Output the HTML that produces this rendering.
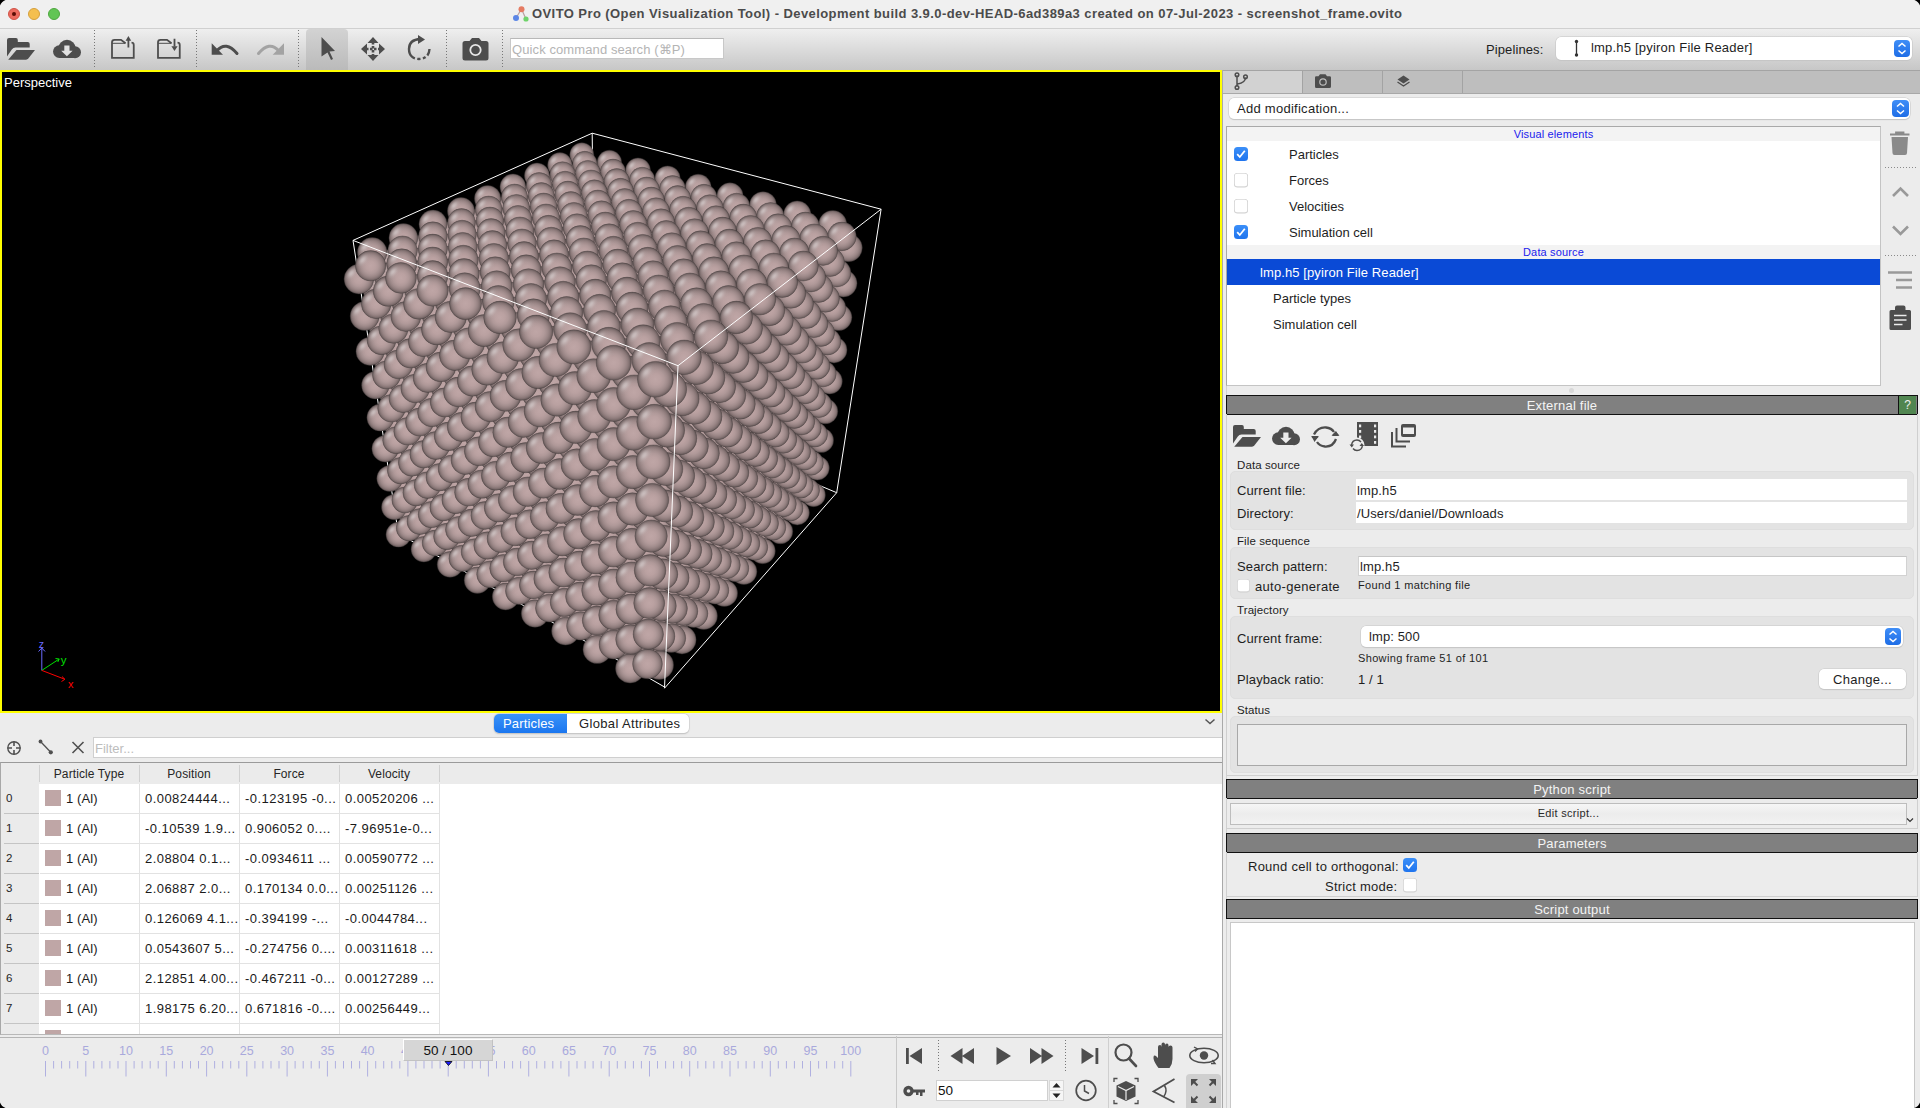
<!DOCTYPE html>
<html><head><meta charset="utf-8">
<style>
*{box-sizing:border-box;margin:0;padding:0}
html,body{width:1920px;height:1108px;overflow:hidden;background:#ececec;font-family:"Liberation Sans",sans-serif;font-size:13px;color:#1e1e1e}
.a{position:absolute}
.t{position:absolute;white-space:nowrap;line-height:1}
svg{position:absolute;overflow:visible}
.h{fill:url(#sh);stroke:none}
</style></head><body>
<!-- TITLE BAR -->
<div class="a" style="left:0;top:0;width:1920px;height:29px;background:#f0f0f0;border-bottom:1px solid #d0d0d0"></div>
<div class="a" style="left:8px;top:8px;width:12px;height:12px;border-radius:6px;background:#ec6a5e;border:0.5px solid #d15448"></div>
<div class="a" style="left:12px;top:12px;width:4px;height:4px;border-radius:2px;background:#5a0c05"></div>
<div class="a" style="left:28px;top:8px;width:12px;height:12px;border-radius:6px;background:#f4bf4f;border:0.5px solid #d6a03c"></div>
<div class="a" style="left:48px;top:8px;width:12px;height:12px;border-radius:6px;background:#61c554;border:0.5px solid #4ea83f"></div>
<svg style="left:512px;top:5px" width="18" height="18" viewBox="0 0 18 18">
<path d="M9.5 4L4 13M9.5 4L13.5 13" stroke="#b9a0a0" stroke-width="1.2"/>
<circle cx="9.5" cy="4.2" r="3" fill="#e57b62"/>
<circle cx="4" cy="13" r="3" fill="#5b86e6"/>
<circle cx="14" cy="14" r="2.6" fill="#6fd36a"/>
</svg>
<div class="t" style="left:532px;top:7px;font-size:13px;font-weight:700;color:#4b4b4b;letter-spacing:0.42px">OVITO Pro (Open Visualization Tool) - Development build 3.9.0-dev-HEAD-6ad389a3 created on 07-Jul-2023 - screenshot_frame.ovito</div>


<!-- TOOLBAR -->
<div class="a" style="left:0;top:29px;width:1920px;height:41px;background:linear-gradient(#efefef,#c7c7c7)"></div>
<div class="a" style="left:306px;top:29px;width:42px;height:41px;border-radius:4px 4px 0 0;background:linear-gradient(#d3d3d3,#bababa)"></div>
<svg style="left:0;top:28px" width="760" height="42" viewBox="0 28 760 42">
<g stroke="#777" stroke-width="1" stroke-dasharray="1 2">
<path d="M94.5 30V69M196.5 30V69M298.5 30V69M446.5 30V69M502.5 30V69"/>
</g>
<g fill="#4d4d4d">
<!-- open folder -->
<path d="M7 40Q7 38 9 38H16Q17.8 38 17.8 40V42H27.7Q29.7 42 29.7 44V47.5H15.5Q13.2 47.5 11.8 49.5L7 56.5Z"/>
<path d="M16.5 50H35L28.5 58.3Q27.4 59.7 26 59.7H8.2Z"/>
<!-- cloud download -->
<circle cx="59.3" cy="51.6" r="6.3"/><circle cx="67" cy="48.6" r="8.8"/><circle cx="75" cy="52.2" r="6"/>
<rect x="59" y="50" width="16.5" height="8"/>
</g>
<path d="M64.3 45.5H69.5V50.7H72.6L66.9 56.3L61.2 50.7H64.3Z" fill="#e2e2e2"/>
<g fill="none" stroke="#4d4d4d" stroke-width="1.8">
<path d="M125.5 43.3L121 39.8H114.5Q112 39.8 112 42.3V57.9H133.75V45Q133.75 42.7 131.5 42.7"/>
<path d="M171.5 43.3L167 39.8H160.5Q158 39.8 158 42.3V57.9H179.75V45Q179.75 42.7 177.5 42.7"/>
<path d="M128.4 47.6V40M174.5 38.7V46.5"/>
</g>
<path d="M112 43.3H125.5M158 43.3H171.5" stroke="#4d4d4d" stroke-width="1"/>
<g fill="#4d4d4d">
<path d="M125.6 40.8L128.4 35.9L131.2 40.8Z"/>
<path d="M171.4 46.2L174.5 51L177.6 46.2Z"/>
</g>
<!-- undo -->
<path d="M217 50.5Q226 40.5 237 53.5" fill="none" stroke="#4d4d4d" stroke-width="3" stroke-linecap="round"/>
<path d="M211.7 43.3V54.7H223Z" fill="#4d4d4d"/>
<!-- redo -->
<path d="M278.5 50.5Q269.5 40.5 258.5 53.5" fill="none" stroke="#a3a3a3" stroke-width="3" stroke-linecap="round"/>
<path d="M284 43.3V54.7H272.7Z" fill="#a3a3a3"/>
<!-- arrow -->
<path d="M321.5 37L335 51L329.5 51.5L333 59L331 60L327.5 52.5L321.5 56.5Z" fill="#4d4d4d"/>
<!-- move -->
<g fill="#4d4d4d">
<path d="M373 37L378.5 43H367.5Z M373 61L378.5 55H367.5Z M361 49L367 43.5V54.5Z M385 49L379 43.5V54.5Z"/>
</g>
<path d="M373 42V56M366 49H380" stroke="#4d4d4d" stroke-width="2.6" stroke-dasharray="2.5 1.5"/>
<!-- rotate -->
<path d="M420.5 39Q409 39.5 409 49Q409 58.5 419 59Q429 58.5 429.5 49" fill="none" stroke="#4d4d4d" stroke-width="2.4" stroke-dasharray="26 0 3 2.5 3 2.5 3 2.5"/>
<path d="M418 35L425 39.5L418 44Z" fill="#4d4d4d"/>
<!-- camera -->
<path d="M462.5 43.5Q462.5 41 465 41H469.5L472 38H479L481.5 41H486Q488.5 41 488.5 43.5V58Q488.5 60.5 486 60.5H465Q462.5 60.5 462.5 58Z" fill="#4d4d4d"/>
<circle cx="475.5" cy="50" r="5.2" fill="none" stroke="#e6e6e6" stroke-width="1.8"/>
</svg>
<div class="a" style="left:510px;top:38px;width:214px;height:21px;background:#fff;border:1px solid #c8c8c8;border-top-color:#b8b8b8"></div>
<div class="t" style="left:512px;top:43px;font-size:13px;color:#b4b4b4;letter-spacing:0.1px">Quick command search (⌘P)</div>
<div class="t" style="left:1486px;top:43px;font-size:13px;color:#1e1e1e;letter-spacing:0.1px">Pipelines:</div>
<div class="a" style="left:1556px;top:37px;width:356px;height:23px;background:#fff;border-radius:5px;box-shadow:0 0 0 0.5px #c4c4c4,0 1px 1px #c8c8c8"></div>
<svg style="left:1570px;top:37px" width="14" height="23" viewBox="0 0 14 23"><path d="M6.5 4.5V18" stroke="#333" stroke-width="1.3"/><circle cx="6.5" cy="4.5" r="1.7" fill="#333"/><circle cx="6.5" cy="18" r="1.7" fill="#333"/></svg>
<div class="t" style="left:1591px;top:41px;font-size:13px;color:#1e1e1e;letter-spacing:0.2px">lmp.h5 [pyiron File Reader]</div>
<div class="a" style="left:1894px;top:40px;width:16px;height:17px;background:linear-gradient(#3f8ef7,#1e6de6);border-radius:4px"></div>
<svg style="left:1894px;top:40px" width="16" height="17" viewBox="0 0 16 17"><path d="M4.5 6.5L8 3.5L11.5 6.5M4.5 10.5L8 13.5L11.5 10.5" stroke="#fff" stroke-width="1.5" fill="none"/></svg>


<!-- VIEWPORT -->
<div class="a" style="left:0;top:70px;width:1222px;height:643px;background:#000;border:2px solid #ffff00"></div>
<div class="t" style="left:4px;top:76px;color:#fff;font-size:13px">Perspective</div>
<svg style="left:2px;top:72px" width="1218" height="639" viewBox="0 0 1218 639">
<defs>
<radialGradient id="sd" cx="0.5" cy="0.5" r="0.5"><stop offset="0.00" stop-color="#bfa6a6"/><stop offset="0.30" stop-color="#baa1a1"/><stop offset="0.50" stop-color="#b09999"/><stop offset="0.65" stop-color="#a38e8e"/><stop offset="0.75" stop-color="#988484"/><stop offset="0.85" stop-color="#897777"/><stop offset="0.92" stop-color="#796969"/><stop offset="0.97" stop-color="#685b5b"/><stop offset="1.00" stop-color="#4c4242"/></radialGradient>
<radialGradient id="sh" cx="0" cy="0" r="1" gradientTransform="translate(0.235 0.3) rotate(-50.2) scale(0.3947 0.227)"><stop offset="0.000" stop-color="#fff" stop-opacity="0.420"/><stop offset="0.167" stop-color="#fff" stop-opacity="0.361"/><stop offset="0.333" stop-color="#fff" stop-opacity="0.229"/><stop offset="0.500" stop-color="#fff" stop-opacity="0.107"/><stop offset="0.667" stop-color="#fff" stop-opacity="0.037"/><stop offset="0.833" stop-color="#fff" stop-opacity="0.009"/><stop offset="1.000" stop-color="#fff" stop-opacity="0.002"/></radialGradient>
</defs>
<g stroke="#fff" stroke-width="1" fill="none">
<path d="M396.5 461.4L662.5 615.0M396.5 462.6L351.0 168.4M396.5 462.6L593.2 319.2L834.7 420.7M593.2 319.2L590.2 61.2"/>
</g>

<g fill="url(#sd)" stroke="#4c4242" stroke-width="0.45" stroke-opacity="0.8">
<circle cx="811.6" cy="422.9" r="11.8"/><circle class="h" cx="811.6" cy="422.9" r="11.8"/>
<circle cx="798.1" cy="403.2" r="11.8"/><circle class="h" cx="798.1" cy="403.2" r="11.8"/>
<circle cx="788.3" cy="425.1" r="11.8"/><circle class="h" cx="788.3" cy="425.1" r="11.8"/>
<circle cx="579.8" cy="82.7" r="12.0"/><circle class="h" cx="579.8" cy="82.7" r="12.0"/>
<circle cx="593.7" cy="103.0" r="12.0"/><circle class="h" cx="593.7" cy="103.0" r="12.0"/>
<circle cx="569.4" cy="104.3" r="12.0"/><circle class="h" cx="569.4" cy="104.3" r="12.0"/>
<circle cx="815.3" cy="396.1" r="12.0"/><circle class="h" cx="815.3" cy="396.1" r="12.0"/>
<circle cx="805.4" cy="418.4" r="12.1"/><circle class="h" cx="805.4" cy="418.4" r="12.1"/>
<circle cx="795.3" cy="440.8" r="12.1"/><circle class="h" cx="795.3" cy="440.8" r="12.1"/>
<circle cx="801.7" cy="376.0" r="12.0"/><circle class="h" cx="801.7" cy="376.0" r="12.0"/>
<circle cx="791.7" cy="398.3" r="12.0"/><circle class="h" cx="791.7" cy="398.3" r="12.0"/>
<circle cx="781.6" cy="420.6" r="12.1"/><circle class="h" cx="781.6" cy="420.6" r="12.1"/>
<circle cx="771.5" cy="443.1" r="12.1"/><circle class="h" cx="771.5" cy="443.1" r="12.1"/>
<circle cx="607.4" cy="90.4" r="12.2"/><circle class="h" cx="607.4" cy="90.4" r="12.2"/>
<circle cx="582.8" cy="91.6" r="12.3"/><circle class="h" cx="582.8" cy="91.6" r="12.3"/>
<circle cx="621.5" cy="111.0" r="12.2"/><circle class="h" cx="621.5" cy="111.0" r="12.2"/>
<circle cx="557.9" cy="92.9" r="12.3"/><circle class="h" cx="557.9" cy="92.9" r="12.3"/>
<circle cx="596.9" cy="112.4" r="12.2"/><circle class="h" cx="596.9" cy="112.4" r="12.2"/>
<circle cx="819.3" cy="368.2" r="12.3"/><circle class="h" cx="819.3" cy="368.2" r="12.3"/>
<circle cx="396.5" cy="462.6" r="12.5"/><circle class="h" cx="396.5" cy="462.6" r="12.5"/>
<circle cx="572.1" cy="113.7" r="12.3"/><circle class="h" cx="572.1" cy="113.7" r="12.3"/>
<circle cx="809.1" cy="390.9" r="12.3"/><circle class="h" cx="809.1" cy="390.9" r="12.3"/>
<circle cx="547.2" cy="115.1" r="12.3"/><circle class="h" cx="547.2" cy="115.1" r="12.3"/>
<circle cx="422.1" cy="460.1" r="12.4"/><circle class="h" cx="422.1" cy="460.1" r="12.4"/>
<circle cx="798.9" cy="413.7" r="12.3"/><circle class="h" cx="798.9" cy="413.7" r="12.3"/>
<circle cx="407.6" cy="439.5" r="12.5"/><circle class="h" cx="407.6" cy="439.5" r="12.5"/>
<circle cx="788.7" cy="436.5" r="12.3"/><circle class="h" cx="788.7" cy="436.5" r="12.3"/>
<circle cx="778.4" cy="459.4" r="12.4"/><circle class="h" cx="778.4" cy="459.4" r="12.4"/>
<circle cx="795.1" cy="370.4" r="12.3"/><circle class="h" cx="795.1" cy="370.4" r="12.3"/>
<circle cx="784.9" cy="393.1" r="12.3"/><circle class="h" cx="784.9" cy="393.1" r="12.3"/>
<circle cx="774.6" cy="415.9" r="12.3"/><circle class="h" cx="774.6" cy="415.9" r="12.3"/>
<circle cx="636.0" cy="98.3" r="12.4"/><circle class="h" cx="636.0" cy="98.3" r="12.4"/>
<circle cx="764.3" cy="438.9" r="12.3"/><circle class="h" cx="764.3" cy="438.9" r="12.3"/>
<circle cx="753.9" cy="461.9" r="12.4"/><circle class="h" cx="753.9" cy="461.9" r="12.4"/>
<circle cx="650.3" cy="119.3" r="12.4"/><circle class="h" cx="650.3" cy="119.3" r="12.4"/>
<circle cx="611.0" cy="99.6" r="12.5"/><circle class="h" cx="611.0" cy="99.6" r="12.5"/>
<circle cx="585.8" cy="100.9" r="12.5"/><circle class="h" cx="585.8" cy="100.9" r="12.5"/>
<circle cx="625.3" cy="120.7" r="12.4"/><circle class="h" cx="625.3" cy="120.7" r="12.4"/>
<circle cx="823.3" cy="339.3" r="12.5"/><circle class="h" cx="823.3" cy="339.3" r="12.5"/>
<circle cx="560.5" cy="102.3" r="12.6"/><circle class="h" cx="560.5" cy="102.3" r="12.6"/>
<circle cx="600.2" cy="122.1" r="12.5"/><circle class="h" cx="600.2" cy="122.1" r="12.5"/>
<circle cx="421.8" cy="477.2" r="12.7"/><circle class="h" cx="421.8" cy="477.2" r="12.7"/>
<circle cx="535.0" cy="103.6" r="12.6"/><circle class="h" cx="535.0" cy="103.6" r="12.6"/>
<circle cx="813.0" cy="362.4" r="12.5"/><circle class="h" cx="813.0" cy="362.4" r="12.5"/>
<circle cx="407.0" cy="456.2" r="12.7"/><circle class="h" cx="407.0" cy="456.2" r="12.7"/>
<circle cx="447.9" cy="474.7" r="12.6"/><circle class="h" cx="447.9" cy="474.7" r="12.6"/>
<circle cx="392.2" cy="435.1" r="12.7"/><circle class="h" cx="392.2" cy="435.1" r="12.7"/>
<circle cx="575.0" cy="123.5" r="12.5"/><circle class="h" cx="575.0" cy="123.5" r="12.5"/>
<circle cx="433.1" cy="453.7" r="12.7"/><circle class="h" cx="433.1" cy="453.7" r="12.7"/>
<circle cx="802.6" cy="385.5" r="12.5"/><circle class="h" cx="802.6" cy="385.5" r="12.5"/>
<circle cx="418.4" cy="432.7" r="12.7"/><circle class="h" cx="418.4" cy="432.7" r="12.7"/>
<circle cx="549.5" cy="124.9" r="12.6"/><circle class="h" cx="549.5" cy="124.9" r="12.6"/>
<circle cx="403.6" cy="411.6" r="12.7"/><circle class="h" cx="403.6" cy="411.6" r="12.7"/>
<circle cx="523.9" cy="126.3" r="12.6"/><circle class="h" cx="523.9" cy="126.3" r="12.6"/>
<circle cx="792.2" cy="408.7" r="12.6"/><circle class="h" cx="792.2" cy="408.7" r="12.6"/>
<circle cx="781.7" cy="432.1" r="12.6"/><circle class="h" cx="781.7" cy="432.1" r="12.6"/>
<circle cx="665.6" cy="106.5" r="12.6"/><circle class="h" cx="665.6" cy="106.5" r="12.6"/>
<circle cx="771.2" cy="455.5" r="12.6"/><circle class="h" cx="771.2" cy="455.5" r="12.6"/>
<circle cx="788.3" cy="364.5" r="12.5"/><circle class="h" cx="788.3" cy="364.5" r="12.5"/>
<circle cx="760.6" cy="479.0" r="12.7"/><circle class="h" cx="760.6" cy="479.0" r="12.7"/>
<circle cx="777.9" cy="387.7" r="12.5"/><circle class="h" cx="777.9" cy="387.7" r="12.5"/>
<circle cx="640.2" cy="107.9" r="12.7"/><circle class="h" cx="640.2" cy="107.9" r="12.7"/>
<circle cx="767.3" cy="411.1" r="12.6"/><circle class="h" cx="767.3" cy="411.1" r="12.6"/>
<circle cx="756.8" cy="434.5" r="12.6"/><circle class="h" cx="756.8" cy="434.5" r="12.6"/>
<circle cx="735.5" cy="481.6" r="12.7"/><circle class="h" cx="735.5" cy="481.6" r="12.7"/>
<circle cx="746.2" cy="458.0" r="12.6"/><circle class="h" cx="746.2" cy="458.0" r="12.6"/>
<circle cx="614.7" cy="109.3" r="12.7"/><circle class="h" cx="614.7" cy="109.3" r="12.7"/>
<circle cx="827.6" cy="309.2" r="12.7"/><circle class="h" cx="827.6" cy="309.2" r="12.7"/>
<circle cx="629.3" cy="130.8" r="12.7"/><circle class="h" cx="629.3" cy="130.8" r="12.7"/>
<circle cx="589.0" cy="110.7" r="12.8"/><circle class="h" cx="589.0" cy="110.7" r="12.8"/>
<circle cx="448.1" cy="492.4" r="12.9"/><circle class="h" cx="448.1" cy="492.4" r="12.9"/>
<circle cx="474.5" cy="489.8" r="12.9"/><circle class="h" cx="474.5" cy="489.8" r="12.9"/>
<circle cx="817.0" cy="332.7" r="12.8"/><circle class="h" cx="817.0" cy="332.7" r="12.8"/>
<circle cx="563.1" cy="112.0" r="12.8"/><circle class="h" cx="563.1" cy="112.0" r="12.8"/>
<circle cx="433.1" cy="471.0" r="12.9"/><circle class="h" cx="433.1" cy="471.0" r="12.9"/>
<circle cx="603.7" cy="132.2" r="12.7"/><circle class="h" cx="603.7" cy="132.2" r="12.7"/>
<circle cx="418.0" cy="449.5" r="13.0"/><circle class="h" cx="418.0" cy="449.5" r="13.0"/>
<circle cx="459.6" cy="468.4" r="12.9"/><circle class="h" cx="459.6" cy="468.4" r="12.9"/>
<circle cx="537.1" cy="113.4" r="12.9"/><circle class="h" cx="537.1" cy="113.4" r="12.9"/>
<circle cx="402.9" cy="428.0" r="13.0"/><circle class="h" cx="402.9" cy="428.0" r="13.0"/>
<circle cx="387.8" cy="406.5" r="13.0"/><circle class="h" cx="387.8" cy="406.5" r="13.0"/>
<circle cx="806.4" cy="356.2" r="12.8"/><circle class="h" cx="806.4" cy="356.2" r="12.8"/>
<circle cx="510.9" cy="114.8" r="12.9"/><circle class="h" cx="510.9" cy="114.8" r="12.9"/>
<circle cx="444.6" cy="447.0" r="12.9"/><circle class="h" cx="444.6" cy="447.0" r="12.9"/>
<circle cx="577.9" cy="133.7" r="12.8"/><circle class="h" cx="577.9" cy="133.7" r="12.8"/>
<circle cx="696.2" cy="115.1" r="12.9"/><circle class="h" cx="696.2" cy="115.1" r="12.9"/>
<circle cx="429.6" cy="425.6" r="12.9"/><circle class="h" cx="429.6" cy="425.6" r="12.9"/>
<circle cx="399.4" cy="382.6" r="12.9"/><circle class="h" cx="399.4" cy="382.6" r="12.9"/>
<circle cx="414.5" cy="404.1" r="12.9"/><circle class="h" cx="414.5" cy="404.1" r="12.9"/>
<circle cx="551.9" cy="135.2" r="12.8"/><circle class="h" cx="551.9" cy="135.2" r="12.8"/>
<circle cx="795.8" cy="379.8" r="12.8"/><circle class="h" cx="795.8" cy="379.8" r="12.8"/>
<circle cx="791.9" cy="334.8" r="12.8"/><circle class="h" cx="791.9" cy="334.8" r="12.8"/>
<circle cx="525.8" cy="136.6" r="12.9"/><circle class="h" cx="525.8" cy="136.6" r="12.9"/>
<circle cx="785.1" cy="403.6" r="12.8"/><circle class="h" cx="785.1" cy="403.6" r="12.8"/>
<circle cx="499.5" cy="138.1" r="12.9"/><circle class="h" cx="499.5" cy="138.1" r="12.9"/>
<circle cx="670.5" cy="116.5" r="12.9"/><circle class="h" cx="670.5" cy="116.5" r="12.9"/>
<circle cx="774.4" cy="427.4" r="12.9"/><circle class="h" cx="774.4" cy="427.4" r="12.9"/>
<circle cx="781.2" cy="358.4" r="12.8"/><circle class="h" cx="781.2" cy="358.4" r="12.8"/>
<circle cx="741.9" cy="499.6" r="13.0"/><circle class="h" cx="741.9" cy="499.6" r="13.0"/>
<circle cx="763.6" cy="451.4" r="12.9"/><circle class="h" cx="763.6" cy="451.4" r="12.9"/>
<circle cx="752.8" cy="475.4" r="12.9"/><circle class="h" cx="752.8" cy="475.4" r="12.9"/>
<circle cx="770.5" cy="382.1" r="12.8"/><circle class="h" cx="770.5" cy="382.1" r="12.8"/>
<circle cx="644.6" cy="117.9" r="12.9"/><circle class="h" cx="644.6" cy="117.9" r="12.9"/>
<circle cx="832.0" cy="277.9" r="13.0"/><circle class="h" cx="832.0" cy="277.9" r="13.0"/>
<circle cx="759.7" cy="405.9" r="12.8"/><circle class="h" cx="759.7" cy="405.9" r="12.8"/>
<circle cx="716.2" cy="502.3" r="13.0"/><circle class="h" cx="716.2" cy="502.3" r="13.0"/>
<circle cx="748.9" cy="429.9" r="12.9"/><circle class="h" cx="748.9" cy="429.9" r="12.9"/>
<circle cx="659.5" cy="139.8" r="12.9"/><circle class="h" cx="659.5" cy="139.8" r="12.9"/>
<circle cx="727.1" cy="478.0" r="13.0"/><circle class="h" cx="727.1" cy="478.0" r="13.0"/>
<circle cx="738.0" cy="453.9" r="12.9"/><circle class="h" cx="738.0" cy="453.9" r="12.9"/>
<circle cx="618.5" cy="119.3" r="13.0"/><circle class="h" cx="618.5" cy="119.3" r="13.0"/>
<circle cx="475.4" cy="508.2" r="13.2"/><circle class="h" cx="475.4" cy="508.2" r="13.2"/>
<circle cx="502.2" cy="505.4" r="13.1"/><circle class="h" cx="502.2" cy="505.4" r="13.1"/>
<circle cx="821.2" cy="301.8" r="13.0"/><circle class="h" cx="821.2" cy="301.8" r="13.0"/>
<circle cx="633.5" cy="141.3" r="12.9"/><circle class="h" cx="633.5" cy="141.3" r="12.9"/>
<circle cx="460.1" cy="486.4" r="13.2"/><circle class="h" cx="460.1" cy="486.4" r="13.2"/>
<circle cx="592.3" cy="120.8" r="13.0"/><circle class="h" cx="592.3" cy="120.8" r="13.0"/>
<circle cx="728.0" cy="123.9" r="13.1"/><circle class="h" cx="728.0" cy="123.9" r="13.1"/>
<circle cx="487.0" cy="483.7" r="13.1"/><circle class="h" cx="487.0" cy="483.7" r="13.1"/>
<circle cx="444.8" cy="464.5" r="13.2"/><circle class="h" cx="444.8" cy="464.5" r="13.2"/>
<circle cx="810.4" cy="325.7" r="13.0"/><circle class="h" cx="810.4" cy="325.7" r="13.0"/>
<circle cx="565.9" cy="122.2" r="13.1"/><circle class="h" cx="565.9" cy="122.2" r="13.1"/>
<circle cx="471.7" cy="461.9" r="13.1"/><circle class="h" cx="471.7" cy="461.9" r="13.1"/>
<circle cx="607.3" cy="142.8" r="13.0"/><circle class="h" cx="607.3" cy="142.8" r="13.0"/>
<circle cx="429.4" cy="442.6" r="13.2"/><circle class="h" cx="429.4" cy="442.6" r="13.2"/>
<circle cx="383.2" cy="376.7" r="13.3"/><circle class="h" cx="383.2" cy="376.7" r="13.3"/>
<circle cx="414.1" cy="420.7" r="13.2"/><circle class="h" cx="414.1" cy="420.7" r="13.2"/>
<circle cx="398.6" cy="398.7" r="13.2"/><circle class="h" cx="398.6" cy="398.7" r="13.2"/>
<circle cx="456.5" cy="440.1" r="13.1"/><circle class="h" cx="456.5" cy="440.1" r="13.1"/>
<circle cx="395.0" cy="352.3" r="13.2"/><circle class="h" cx="395.0" cy="352.3" r="13.2"/>
<circle cx="539.3" cy="123.7" r="13.1"/><circle class="h" cx="539.3" cy="123.7" r="13.1"/>
<circle cx="441.2" cy="418.2" r="13.1"/><circle class="h" cx="441.2" cy="418.2" r="13.1"/>
<circle cx="410.4" cy="374.4" r="13.2"/><circle class="h" cx="410.4" cy="374.4" r="13.2"/>
<circle cx="425.8" cy="396.3" r="13.1"/><circle class="h" cx="425.8" cy="396.3" r="13.1"/>
<circle cx="512.5" cy="125.2" r="13.2"/><circle class="h" cx="512.5" cy="125.2" r="13.2"/>
<circle cx="581.0" cy="144.3" r="13.0"/><circle class="h" cx="581.0" cy="144.3" r="13.0"/>
<circle cx="799.6" cy="349.8" r="13.1"/><circle class="h" cx="799.6" cy="349.8" r="13.1"/>
<circle cx="701.9" cy="125.4" r="13.1"/><circle class="h" cx="701.9" cy="125.4" r="13.1"/>
<circle cx="485.6" cy="126.6" r="13.2"/><circle class="h" cx="485.6" cy="126.6" r="13.2"/>
<circle cx="554.5" cy="145.9" r="13.1"/><circle class="h" cx="554.5" cy="145.9" r="13.1"/>
<circle cx="788.7" cy="373.9" r="13.1"/><circle class="h" cx="788.7" cy="373.9" r="13.1"/>
<circle cx="527.8" cy="147.4" r="13.1"/><circle class="h" cx="527.8" cy="147.4" r="13.1"/>
<circle cx="784.7" cy="327.8" r="13.1"/><circle class="h" cx="784.7" cy="327.8" r="13.1"/>
<circle cx="500.9" cy="149.0" r="13.2"/><circle class="h" cx="500.9" cy="149.0" r="13.2"/>
<circle cx="473.9" cy="150.5" r="13.3"/><circle class="h" cx="473.9" cy="150.5" r="13.3"/>
<circle cx="777.8" cy="398.2" r="13.1"/><circle class="h" cx="777.8" cy="398.2" r="13.1"/>
<circle cx="836.6" cy="245.3" r="13.3"/><circle class="h" cx="836.6" cy="245.3" r="13.3"/>
<circle cx="675.6" cy="126.8" r="13.2"/><circle class="h" cx="675.6" cy="126.8" r="13.2"/>
<circle cx="722.3" cy="521.2" r="13.3"/><circle class="h" cx="722.3" cy="521.2" r="13.3"/>
<circle cx="766.8" cy="422.6" r="13.1"/><circle class="h" cx="766.8" cy="422.6" r="13.1"/>
<circle cx="773.8" cy="352.0" r="13.1"/><circle class="h" cx="773.8" cy="352.0" r="13.1"/>
<circle cx="733.5" cy="496.4" r="13.3"/><circle class="h" cx="733.5" cy="496.4" r="13.3"/>
<circle cx="755.7" cy="447.1" r="13.2"/><circle class="h" cx="755.7" cy="447.1" r="13.2"/>
<circle cx="744.6" cy="471.7" r="13.2"/><circle class="h" cx="744.6" cy="471.7" r="13.2"/>
<circle cx="530.9" cy="521.7" r="13.3"/><circle class="h" cx="530.9" cy="521.7" r="13.3"/>
<circle cx="503.7" cy="524.5" r="13.4"/><circle class="h" cx="503.7" cy="524.5" r="13.4"/>
<circle cx="762.8" cy="376.2" r="13.1"/><circle class="h" cx="762.8" cy="376.2" r="13.1"/>
<circle cx="649.2" cy="128.3" r="13.2"/><circle class="h" cx="649.2" cy="128.3" r="13.2"/>
<circle cx="761.0" cy="133.1" r="13.4"/><circle class="h" cx="761.0" cy="133.1" r="13.4"/>
<circle cx="825.6" cy="269.6" r="13.3"/><circle class="h" cx="825.6" cy="269.6" r="13.3"/>
<circle cx="695.8" cy="524.0" r="13.4"/><circle class="h" cx="695.8" cy="524.0" r="13.4"/>
<circle cx="751.7" cy="400.6" r="13.1"/><circle class="h" cx="751.7" cy="400.6" r="13.1"/>
<circle cx="664.4" cy="150.7" r="13.2"/><circle class="h" cx="664.4" cy="150.7" r="13.2"/>
<circle cx="707.1" cy="499.1" r="13.3"/><circle class="h" cx="707.1" cy="499.1" r="13.3"/>
<circle cx="740.7" cy="425.1" r="13.2"/><circle class="h" cx="740.7" cy="425.1" r="13.2"/>
<circle cx="488.1" cy="502.3" r="13.4"/><circle class="h" cx="488.1" cy="502.3" r="13.4"/>
<circle cx="515.4" cy="499.6" r="13.3"/><circle class="h" cx="515.4" cy="499.6" r="13.3"/>
<circle cx="718.3" cy="474.3" r="13.3"/><circle class="h" cx="718.3" cy="474.3" r="13.3"/>
<circle cx="729.5" cy="449.6" r="13.2"/><circle class="h" cx="729.5" cy="449.6" r="13.2"/>
<circle cx="622.6" cy="129.8" r="13.3"/><circle class="h" cx="622.6" cy="129.8" r="13.3"/>
<circle cx="472.6" cy="480.1" r="13.4"/><circle class="h" cx="472.6" cy="480.1" r="13.4"/>
<circle cx="814.6" cy="294.0" r="13.3"/><circle class="h" cx="814.6" cy="294.0" r="13.3"/>
<circle cx="499.9" cy="477.4" r="13.3"/><circle class="h" cx="499.9" cy="477.4" r="13.3"/>
<circle cx="637.8" cy="152.3" r="13.2"/><circle class="h" cx="637.8" cy="152.3" r="13.2"/>
<circle cx="734.5" cy="134.6" r="13.4"/><circle class="h" cx="734.5" cy="134.6" r="13.4"/>
<circle cx="595.8" cy="131.3" r="13.3"/><circle class="h" cx="595.8" cy="131.3" r="13.3"/>
<circle cx="456.9" cy="457.8" r="13.4"/><circle class="h" cx="456.9" cy="457.8" r="13.4"/>
<circle cx="378.4" cy="345.6" r="13.5"/><circle class="h" cx="378.4" cy="345.6" r="13.5"/>
<circle cx="484.4" cy="455.2" r="13.3"/><circle class="h" cx="484.4" cy="455.2" r="13.3"/>
<circle cx="390.5" cy="320.9" r="13.5"/><circle class="h" cx="390.5" cy="320.9" r="13.5"/>
<circle cx="441.3" cy="435.5" r="13.4"/><circle class="h" cx="441.3" cy="435.5" r="13.4"/>
<circle cx="394.2" cy="368.2" r="13.5"/><circle class="h" cx="394.2" cy="368.2" r="13.5"/>
<circle cx="425.6" cy="413.1" r="13.4"/><circle class="h" cx="425.6" cy="413.1" r="13.4"/>
<circle cx="409.9" cy="390.7" r="13.5"/><circle class="h" cx="409.9" cy="390.7" r="13.5"/>
<circle cx="568.8" cy="132.9" r="13.3"/><circle class="h" cx="568.8" cy="132.9" r="13.3"/>
<circle cx="611.1" cy="153.9" r="13.3"/><circle class="h" cx="611.1" cy="153.9" r="13.3"/>
<circle cx="803.5" cy="318.4" r="13.3"/><circle class="h" cx="803.5" cy="318.4" r="13.3"/>
<circle cx="468.8" cy="432.9" r="13.4"/><circle class="h" cx="468.8" cy="432.9" r="13.4"/>
<circle cx="406.2" cy="343.4" r="13.4"/><circle class="h" cx="406.2" cy="343.4" r="13.4"/>
<circle cx="453.2" cy="410.6" r="13.4"/><circle class="h" cx="453.2" cy="410.6" r="13.4"/>
<circle cx="421.9" cy="365.8" r="13.4"/><circle class="h" cx="421.9" cy="365.8" r="13.4"/>
<circle cx="437.6" cy="388.3" r="13.4"/><circle class="h" cx="437.6" cy="388.3" r="13.4"/>
<circle cx="541.6" cy="134.4" r="13.4"/><circle class="h" cx="541.6" cy="134.4" r="13.4"/>
<circle cx="841.4" cy="211.3" r="13.6"/><circle class="h" cx="841.4" cy="211.3" r="13.6"/>
<circle cx="584.2" cy="155.5" r="13.3"/><circle class="h" cx="584.2" cy="155.5" r="13.3"/>
<circle cx="707.8" cy="136.1" r="13.4"/><circle class="h" cx="707.8" cy="136.1" r="13.4"/>
<circle cx="514.2" cy="135.9" r="13.5"/><circle class="h" cx="514.2" cy="135.9" r="13.5"/>
<circle cx="788.3" cy="296.0" r="13.3"/><circle class="h" cx="788.3" cy="296.0" r="13.3"/>
<circle cx="792.4" cy="343.0" r="13.4"/><circle class="h" cx="792.4" cy="343.0" r="13.4"/>
<circle cx="459.0" cy="139.0" r="13.6"/><circle class="h" cx="459.0" cy="139.0" r="13.6"/>
<circle cx="486.7" cy="137.5" r="13.5"/><circle class="h" cx="486.7" cy="137.5" r="13.5"/>
<circle cx="795.2" cy="142.6" r="13.7"/><circle class="h" cx="795.2" cy="142.6" r="13.7"/>
<circle cx="557.1" cy="157.1" r="13.4"/><circle class="h" cx="557.1" cy="157.1" r="13.4"/>
<circle cx="560.6" cy="538.5" r="13.6"/><circle class="h" cx="560.6" cy="538.5" r="13.6"/>
<circle cx="781.3" cy="367.8" r="13.4"/><circle class="h" cx="781.3" cy="367.8" r="13.4"/>
<circle cx="529.9" cy="158.7" r="13.4"/><circle class="h" cx="529.9" cy="158.7" r="13.4"/>
<circle cx="533.0" cy="541.5" r="13.7"/><circle class="h" cx="533.0" cy="541.5" r="13.7"/>
<circle cx="777.2" cy="320.6" r="13.3"/><circle class="h" cx="777.2" cy="320.6" r="13.3"/>
<circle cx="446.9" cy="163.6" r="13.6"/><circle class="h" cx="446.9" cy="163.6" r="13.6"/>
<circle cx="502.4" cy="160.3" r="13.5"/><circle class="h" cx="502.4" cy="160.3" r="13.5"/>
<circle cx="474.7" cy="161.9" r="13.5"/><circle class="h" cx="474.7" cy="161.9" r="13.5"/>
<circle cx="681.0" cy="137.7" r="13.5"/><circle class="h" cx="681.0" cy="137.7" r="13.5"/>
<circle cx="830.2" cy="236.0" r="13.6"/><circle class="h" cx="830.2" cy="236.0" r="13.6"/>
<circle cx="701.7" cy="543.9" r="13.7"/><circle class="h" cx="701.7" cy="543.9" r="13.7"/>
<circle cx="770.1" cy="392.6" r="13.4"/><circle class="h" cx="770.1" cy="392.6" r="13.4"/>
<circle cx="713.2" cy="518.4" r="13.6"/><circle class="h" cx="713.2" cy="518.4" r="13.6"/>
<circle cx="758.8" cy="417.5" r="13.4"/><circle class="h" cx="758.8" cy="417.5" r="13.4"/>
<circle cx="544.9" cy="516.0" r="13.6"/><circle class="h" cx="544.9" cy="516.0" r="13.6"/>
<circle cx="766.0" cy="345.3" r="13.4"/><circle class="h" cx="766.0" cy="345.3" r="13.4"/>
<circle cx="517.2" cy="518.9" r="13.7"/><circle class="h" cx="517.2" cy="518.9" r="13.7"/>
<circle cx="724.7" cy="493.0" r="13.6"/><circle class="h" cx="724.7" cy="493.0" r="13.6"/>
<circle cx="747.5" cy="442.6" r="13.5"/><circle class="h" cx="747.5" cy="442.6" r="13.5"/>
<circle cx="736.1" cy="467.7" r="13.5"/><circle class="h" cx="736.1" cy="467.7" r="13.5"/>
<circle cx="768.3" cy="144.2" r="13.7"/><circle class="h" cx="768.3" cy="144.2" r="13.7"/>
<circle cx="654.0" cy="139.2" r="13.5"/><circle class="h" cx="654.0" cy="139.2" r="13.5"/>
<circle cx="674.4" cy="546.9" r="13.7"/><circle class="h" cx="674.4" cy="546.9" r="13.7"/>
<circle cx="754.7" cy="370.1" r="13.4"/><circle class="h" cx="754.7" cy="370.1" r="13.4"/>
<circle cx="819.0" cy="260.8" r="13.6"/><circle class="h" cx="819.0" cy="260.8" r="13.6"/>
<circle cx="529.2" cy="493.4" r="13.6"/><circle class="h" cx="529.2" cy="493.4" r="13.6"/>
<circle cx="669.5" cy="162.1" r="13.5"/><circle class="h" cx="669.5" cy="162.1" r="13.5"/>
<circle cx="501.4" cy="496.2" r="13.7"/><circle class="h" cx="501.4" cy="496.2" r="13.7"/>
<circle cx="686.1" cy="521.3" r="13.7"/><circle class="h" cx="686.1" cy="521.3" r="13.7"/>
<circle cx="743.4" cy="395.0" r="13.4"/><circle class="h" cx="743.4" cy="395.0" r="13.4"/>
<circle cx="697.6" cy="495.8" r="13.6"/><circle class="h" cx="697.6" cy="495.8" r="13.6"/>
<circle cx="732.0" cy="420.0" r="13.5"/><circle class="h" cx="732.0" cy="420.0" r="13.5"/>
<circle cx="626.8" cy="140.8" r="13.5"/><circle class="h" cx="626.8" cy="140.8" r="13.5"/>
<circle cx="709.2" cy="470.4" r="13.6"/><circle class="h" cx="709.2" cy="470.4" r="13.6"/>
<circle cx="720.6" cy="445.2" r="13.5"/><circle class="h" cx="720.6" cy="445.2" r="13.5"/>
<circle cx="485.5" cy="473.5" r="13.7"/><circle class="h" cx="485.5" cy="473.5" r="13.7"/>
<circle cx="513.4" cy="470.8" r="13.6"/><circle class="h" cx="513.4" cy="470.8" r="13.6"/>
<circle cx="373.4" cy="313.2" r="13.8"/><circle class="h" cx="373.4" cy="313.2" r="13.8"/>
<circle cx="385.8" cy="288.0" r="13.8"/><circle class="h" cx="385.8" cy="288.0" r="13.8"/>
<circle cx="846.4" cy="175.8" r="13.9"/><circle class="h" cx="846.4" cy="175.8" r="13.9"/>
<circle cx="830.7" cy="152.4" r="14.0"/><circle class="h" cx="830.7" cy="152.4" r="14.0"/>
<circle cx="642.4" cy="163.7" r="13.5"/><circle class="h" cx="642.4" cy="163.7" r="13.5"/>
<circle cx="807.7" cy="285.8" r="13.6"/><circle class="h" cx="807.7" cy="285.8" r="13.6"/>
<circle cx="741.3" cy="145.8" r="13.7"/><circle class="h" cx="741.3" cy="145.8" r="13.7"/>
<circle cx="469.6" cy="450.8" r="13.7"/><circle class="h" cx="469.6" cy="450.8" r="13.7"/>
<circle cx="389.5" cy="336.3" r="13.8"/><circle class="h" cx="389.5" cy="336.3" r="13.8"/>
<circle cx="497.5" cy="448.2" r="13.6"/><circle class="h" cx="497.5" cy="448.2" r="13.6"/>
<circle cx="401.8" cy="311.1" r="13.7"/><circle class="h" cx="401.8" cy="311.1" r="13.7"/>
<circle cx="599.4" cy="142.4" r="13.6"/><circle class="h" cx="599.4" cy="142.4" r="13.6"/>
<circle cx="453.6" cy="428.0" r="13.7"/><circle class="h" cx="453.6" cy="428.0" r="13.7"/>
<circle cx="405.6" cy="359.3" r="13.8"/><circle class="h" cx="405.6" cy="359.3" r="13.8"/>
<circle cx="437.7" cy="405.2" r="13.7"/><circle class="h" cx="437.7" cy="405.2" r="13.7"/>
<circle cx="421.6" cy="382.3" r="13.7"/><circle class="h" cx="421.6" cy="382.3" r="13.7"/>
<circle cx="481.7" cy="425.4" r="13.6"/><circle class="h" cx="481.7" cy="425.4" r="13.6"/>
<circle cx="417.9" cy="334.0" r="13.7"/><circle class="h" cx="417.9" cy="334.0" r="13.7"/>
<circle cx="591.5" cy="556.0" r="13.9"/><circle class="h" cx="591.5" cy="556.0" r="13.9"/>
<circle cx="465.8" cy="402.7" r="13.6"/><circle class="h" cx="465.8" cy="402.7" r="13.6"/>
<circle cx="433.9" cy="357.0" r="13.7"/><circle class="h" cx="433.9" cy="357.0" r="13.7"/>
<circle cx="615.1" cy="165.4" r="13.5"/><circle class="h" cx="615.1" cy="165.4" r="13.5"/>
<circle cx="449.9" cy="379.8" r="13.6"/><circle class="h" cx="449.9" cy="379.8" r="13.6"/>
<circle cx="571.8" cy="144.0" r="13.6"/><circle class="h" cx="571.8" cy="144.0" r="13.6"/>
<circle cx="796.3" cy="310.8" r="13.6"/><circle class="h" cx="796.3" cy="310.8" r="13.6"/>
<circle cx="563.5" cy="559.1" r="13.9"/><circle class="h" cx="563.5" cy="559.1" r="13.9"/>
<circle cx="835.0" cy="201.0" r="13.9"/><circle class="h" cx="835.0" cy="201.0" r="13.9"/>
<circle cx="544.0" cy="145.6" r="13.7"/><circle class="h" cx="544.0" cy="145.6" r="13.7"/>
<circle cx="714.0" cy="147.4" r="13.7"/><circle class="h" cx="714.0" cy="147.4" r="13.7"/>
<circle cx="587.6" cy="167.1" r="13.6"/><circle class="h" cx="587.6" cy="167.1" r="13.6"/>
<circle cx="431.0" cy="152.1" r="14.0"/><circle class="h" cx="431.0" cy="152.1" r="14.0"/>
<circle cx="516.1" cy="147.2" r="13.8"/><circle class="h" cx="516.1" cy="147.2" r="13.8"/>
<circle cx="780.8" cy="287.9" r="13.6"/><circle class="h" cx="780.8" cy="287.9" r="13.6"/>
<circle cx="459.5" cy="150.5" r="13.9"/><circle class="h" cx="459.5" cy="150.5" r="13.9"/>
<circle cx="487.9" cy="148.8" r="13.8"/><circle class="h" cx="487.9" cy="148.8" r="13.8"/>
<circle cx="803.4" cy="154.1" r="14.0"/><circle class="h" cx="803.4" cy="154.1" r="14.0"/>
<circle cx="575.5" cy="533.1" r="13.9"/><circle class="h" cx="575.5" cy="533.1" r="13.9"/>
<circle cx="784.9" cy="336.0" r="13.7"/><circle class="h" cx="784.9" cy="336.0" r="13.7"/>
<circle cx="559.9" cy="168.7" r="13.6"/><circle class="h" cx="559.9" cy="168.7" r="13.6"/>
<circle cx="547.4" cy="536.1" r="13.9"/><circle class="h" cx="547.4" cy="536.1" r="13.9"/>
<circle cx="418.5" cy="177.3" r="14.0"/><circle class="h" cx="418.5" cy="177.3" r="14.0"/>
<circle cx="532.0" cy="170.4" r="13.7"/><circle class="h" cx="532.0" cy="170.4" r="13.7"/>
<circle cx="680.0" cy="567.8" r="14.1"/><circle class="h" cx="680.0" cy="567.8" r="14.1"/>
<circle cx="773.5" cy="361.3" r="13.7"/><circle class="h" cx="773.5" cy="361.3" r="13.7"/>
<circle cx="447.2" cy="175.6" r="13.9"/><circle class="h" cx="447.2" cy="175.6" r="13.9"/>
<circle cx="769.3" cy="313.0" r="13.7"/><circle class="h" cx="769.3" cy="313.0" r="13.7"/>
<circle cx="503.9" cy="172.1" r="13.8"/><circle class="h" cx="503.9" cy="172.1" r="13.8"/>
<circle cx="686.6" cy="149.0" r="13.8"/><circle class="h" cx="686.6" cy="149.0" r="13.8"/>
<circle cx="475.7" cy="173.9" r="13.8"/><circle class="h" cx="475.7" cy="173.9" r="13.8"/>
<circle cx="823.5" cy="226.3" r="13.9"/><circle class="h" cx="823.5" cy="226.3" r="13.9"/>
<circle cx="559.5" cy="510.1" r="13.9"/><circle class="h" cx="559.5" cy="510.1" r="13.9"/>
<circle cx="691.9" cy="541.6" r="14.0"/><circle class="h" cx="691.9" cy="541.6" r="14.0"/>
<circle cx="762.0" cy="386.7" r="13.7"/><circle class="h" cx="762.0" cy="386.7" r="13.7"/>
<circle cx="531.3" cy="513.0" r="13.9"/><circle class="h" cx="531.3" cy="513.0" r="13.9"/>
<circle cx="651.9" cy="571.0" r="14.1"/><circle class="h" cx="651.9" cy="571.0" r="14.1"/>
<circle cx="703.7" cy="515.5" r="13.9"/><circle class="h" cx="703.7" cy="515.5" r="13.9"/>
<circle cx="757.8" cy="338.3" r="13.7"/><circle class="h" cx="757.8" cy="338.3" r="13.7"/>
<circle cx="750.4" cy="412.2" r="13.8"/><circle class="h" cx="750.4" cy="412.2" r="13.8"/>
<circle cx="776.0" cy="155.8" r="14.0"/><circle class="h" cx="776.0" cy="155.8" r="14.0"/>
<circle cx="715.4" cy="489.5" r="13.9"/><circle class="h" cx="715.4" cy="489.5" r="13.9"/>
<circle cx="738.8" cy="437.8" r="13.8"/><circle class="h" cx="738.8" cy="437.8" r="13.8"/>
<circle cx="543.5" cy="487.1" r="13.9"/><circle class="h" cx="543.5" cy="487.1" r="13.9"/>
<circle cx="727.2" cy="463.6" r="13.8"/><circle class="h" cx="727.2" cy="463.6" r="13.8"/>
<circle cx="380.8" cy="253.7" r="14.1"/><circle class="h" cx="380.8" cy="253.7" r="14.1"/>
<circle cx="659.0" cy="150.6" r="13.8"/><circle class="h" cx="659.0" cy="150.6" r="13.8"/>
<circle cx="515.2" cy="489.9" r="13.9"/><circle class="h" cx="515.2" cy="489.9" r="13.9"/>
<circle cx="368.1" cy="279.4" r="14.1"/><circle class="h" cx="368.1" cy="279.4" r="14.1"/>
<circle cx="663.9" cy="544.6" r="14.1"/><circle class="h" cx="663.9" cy="544.6" r="14.1"/>
<circle cx="623.6" cy="574.2" r="14.2"/><circle class="h" cx="623.6" cy="574.2" r="14.2"/>
<circle cx="746.3" cy="363.6" r="13.7"/><circle class="h" cx="746.3" cy="363.6" r="13.7"/>
<circle cx="674.9" cy="174.0" r="13.8"/><circle class="h" cx="674.9" cy="174.0" r="13.8"/>
<circle cx="812.0" cy="251.7" r="13.9"/><circle class="h" cx="812.0" cy="251.7" r="13.9"/>
<circle cx="675.8" cy="518.4" r="14.0"/><circle class="h" cx="675.8" cy="518.4" r="14.0"/>
<circle cx="527.4" cy="464.0" r="13.9"/><circle class="h" cx="527.4" cy="464.0" r="13.9"/>
<circle cx="397.3" cy="277.3" r="14.0"/><circle class="h" cx="397.3" cy="277.3" r="14.0"/>
<circle cx="734.7" cy="389.1" r="13.7"/><circle class="h" cx="734.7" cy="389.1" r="13.7"/>
<circle cx="499.0" cy="466.7" r="13.9"/><circle class="h" cx="499.0" cy="466.7" r="13.9"/>
<circle cx="384.6" cy="303.0" r="14.1"/><circle class="h" cx="384.6" cy="303.0" r="14.1"/>
<circle cx="595.2" cy="577.4" r="14.2"/><circle class="h" cx="595.2" cy="577.4" r="14.2"/>
<circle cx="631.2" cy="152.3" r="13.8"/><circle class="h" cx="631.2" cy="152.3" r="13.8"/>
<circle cx="687.7" cy="492.3" r="13.9"/><circle class="h" cx="687.7" cy="492.3" r="13.9"/>
<circle cx="723.0" cy="414.8" r="13.8"/><circle class="h" cx="723.0" cy="414.8" r="13.8"/>
<circle cx="839.9" cy="164.4" r="14.3"/><circle class="h" cx="839.9" cy="164.4" r="14.3"/>
<circle cx="699.5" cy="466.3" r="13.9"/><circle class="h" cx="699.5" cy="466.3" r="13.9"/>
<circle cx="711.3" cy="440.5" r="13.8"/><circle class="h" cx="711.3" cy="440.5" r="13.8"/>
<circle cx="482.8" cy="443.5" r="13.9"/><circle class="h" cx="482.8" cy="443.5" r="13.9"/>
<circle cx="511.2" cy="440.8" r="13.9"/><circle class="h" cx="511.2" cy="440.8" r="13.9"/>
<circle cx="401.1" cy="326.6" r="14.1"/><circle class="h" cx="401.1" cy="326.6" r="14.1"/>
<circle cx="413.7" cy="300.8" r="14.0"/><circle class="h" cx="413.7" cy="300.8" r="14.0"/>
<circle cx="748.3" cy="157.4" r="14.0"/><circle class="h" cx="748.3" cy="157.4" r="14.0"/>
<circle cx="647.1" cy="175.7" r="13.8"/><circle class="h" cx="647.1" cy="175.7" r="13.8"/>
<circle cx="800.4" cy="277.2" r="13.9"/><circle class="h" cx="800.4" cy="277.2" r="13.9"/>
<circle cx="466.5" cy="420.2" r="13.9"/><circle class="h" cx="466.5" cy="420.2" r="13.9"/>
<circle cx="417.5" cy="350.1" r="14.0"/><circle class="h" cx="417.5" cy="350.1" r="14.0"/>
<circle cx="607.4" cy="550.8" r="14.2"/><circle class="h" cx="607.4" cy="550.8" r="14.2"/>
<circle cx="495.1" cy="417.6" r="13.9"/><circle class="h" cx="495.1" cy="417.6" r="13.9"/>
<circle cx="430.0" cy="324.3" r="14.0"/><circle class="h" cx="430.0" cy="324.3" r="14.0"/>
<circle cx="450.2" cy="396.9" r="14.0"/><circle class="h" cx="450.2" cy="396.9" r="14.0"/>
<circle cx="433.9" cy="373.5" r="14.0"/><circle class="h" cx="433.9" cy="373.5" r="14.0"/>
<circle cx="603.2" cy="153.9" r="13.9"/><circle class="h" cx="603.2" cy="153.9" r="13.9"/>
<circle cx="478.9" cy="394.4" r="13.9"/><circle class="h" cx="478.9" cy="394.4" r="13.9"/>
<circle cx="446.3" cy="347.7" r="13.9"/><circle class="h" cx="446.3" cy="347.7" r="13.9"/>
<circle cx="462.6" cy="371.1" r="13.9"/><circle class="h" cx="462.6" cy="371.1" r="13.9"/>
<circle cx="578.8" cy="553.9" r="14.2"/><circle class="h" cx="578.8" cy="553.9" r="14.2"/>
<circle cx="619.2" cy="177.5" r="13.8"/><circle class="h" cx="619.2" cy="177.5" r="13.8"/>
<circle cx="575.0" cy="155.6" r="13.9"/><circle class="h" cx="575.0" cy="155.6" r="13.9"/>
<circle cx="788.7" cy="302.8" r="14.0"/><circle class="h" cx="788.7" cy="302.8" r="14.0"/>
<circle cx="828.2" cy="190.2" r="14.3"/><circle class="h" cx="828.2" cy="190.2" r="14.3"/>
<circle cx="720.5" cy="159.1" r="14.0"/><circle class="h" cx="720.5" cy="159.1" r="14.0"/>
<circle cx="401.4" cy="165.9" r="14.4"/><circle class="h" cx="401.4" cy="165.9" r="14.4"/>
<circle cx="591.1" cy="527.4" r="14.1"/><circle class="h" cx="591.1" cy="527.4" r="14.1"/>
<circle cx="546.5" cy="157.3" r="14.0"/><circle class="h" cx="546.5" cy="157.3" r="14.0"/>
<circle cx="591.1" cy="179.2" r="13.9"/><circle class="h" cx="591.1" cy="179.2" r="13.9"/>
<circle cx="812.1" cy="166.2" r="14.3"/><circle class="h" cx="812.1" cy="166.2" r="14.3"/>
<circle cx="430.9" cy="164.1" r="14.3"/><circle class="h" cx="430.9" cy="164.1" r="14.3"/>
<circle cx="517.9" cy="159.0" r="14.1"/><circle class="h" cx="517.9" cy="159.0" r="14.1"/>
<circle cx="562.4" cy="530.4" r="14.2"/><circle class="h" cx="562.4" cy="530.4" r="14.2"/>
<circle cx="772.8" cy="279.3" r="14.0"/><circle class="h" cx="772.8" cy="279.3" r="14.0"/>
<circle cx="460.1" cy="162.4" r="14.2"/><circle class="h" cx="460.1" cy="162.4" r="14.2"/>
<circle cx="489.1" cy="160.7" r="14.1"/><circle class="h" cx="489.1" cy="160.7" r="14.1"/>
<circle cx="657.1" cy="593.1" r="14.5"/><circle class="h" cx="657.1" cy="593.1" r="14.5"/>
<circle cx="388.6" cy="191.8" r="14.4"/><circle class="h" cx="388.6" cy="191.8" r="14.4"/>
<circle cx="777.1" cy="328.6" r="14.0"/><circle class="h" cx="777.1" cy="328.6" r="14.0"/>
<circle cx="562.8" cy="181.0" r="13.9"/><circle class="h" cx="562.8" cy="181.0" r="13.9"/>
<circle cx="418.1" cy="190.0" r="14.3"/><circle class="h" cx="418.1" cy="190.0" r="14.3"/>
<circle cx="574.8" cy="503.9" r="14.1"/><circle class="h" cx="574.8" cy="503.9" r="14.1"/>
<circle cx="534.3" cy="182.7" r="14.0"/><circle class="h" cx="534.3" cy="182.7" r="14.0"/>
<circle cx="375.6" cy="217.9" r="14.4"/><circle class="h" cx="375.6" cy="217.9" r="14.4"/>
<circle cx="628.1" cy="596.4" r="14.6"/><circle class="h" cx="628.1" cy="596.4" r="14.6"/>
<circle cx="692.5" cy="160.8" r="14.1"/><circle class="h" cx="692.5" cy="160.8" r="14.1"/>
<circle cx="669.3" cy="566.1" r="14.4"/><circle class="h" cx="669.3" cy="566.1" r="14.4"/>
<circle cx="447.5" cy="188.2" r="14.2"/><circle class="h" cx="447.5" cy="188.2" r="14.2"/>
<circle cx="505.5" cy="184.5" r="14.1"/><circle class="h" cx="505.5" cy="184.5" r="14.1"/>
<circle cx="765.3" cy="354.5" r="14.0"/><circle class="h" cx="765.3" cy="354.5" r="14.0"/>
<circle cx="546.0" cy="506.9" r="14.2"/><circle class="h" cx="546.0" cy="506.9" r="14.2"/>
<circle cx="476.6" cy="186.3" r="14.1"/><circle class="h" cx="476.6" cy="186.3" r="14.1"/>
<circle cx="761.1" cy="305.0" r="14.0"/><circle class="h" cx="761.1" cy="305.0" r="14.0"/>
<circle cx="362.7" cy="244.1" r="14.5"/><circle class="h" cx="362.7" cy="244.1" r="14.5"/>
<circle cx="708.6" cy="184.6" r="14.0"/><circle class="h" cx="708.6" cy="184.6" r="14.0"/>
<circle cx="816.5" cy="216.1" r="14.3"/><circle class="h" cx="816.5" cy="216.1" r="14.3"/>
<circle cx="681.5" cy="539.2" r="14.3"/><circle class="h" cx="681.5" cy="539.2" r="14.3"/>
<circle cx="753.5" cy="380.5" r="14.0"/><circle class="h" cx="753.5" cy="380.5" r="14.0"/>
<circle cx="558.4" cy="480.4" r="14.1"/><circle class="h" cx="558.4" cy="480.4" r="14.1"/>
<circle cx="784.0" cy="167.9" r="14.3"/><circle class="h" cx="784.0" cy="167.9" r="14.3"/>
<circle cx="392.5" cy="242.1" r="14.4"/><circle class="h" cx="392.5" cy="242.1" r="14.4"/>
<circle cx="640.5" cy="569.3" r="14.5"/><circle class="h" cx="640.5" cy="569.3" r="14.5"/>
<circle cx="749.3" cy="330.9" r="14.0"/><circle class="h" cx="749.3" cy="330.9" r="14.0"/>
<circle cx="529.5" cy="483.3" r="14.2"/><circle class="h" cx="529.5" cy="483.3" r="14.2"/>
<circle cx="379.5" cy="268.3" r="14.4"/><circle class="h" cx="379.5" cy="268.3" r="14.4"/>
<circle cx="693.7" cy="512.4" r="14.3"/><circle class="h" cx="693.7" cy="512.4" r="14.3"/>
<circle cx="741.7" cy="406.6" r="14.1"/><circle class="h" cx="741.7" cy="406.6" r="14.1"/>
<circle cx="664.2" cy="162.6" r="14.1"/><circle class="h" cx="664.2" cy="162.6" r="14.1"/>
<circle cx="705.7" cy="485.8" r="14.2"/><circle class="h" cx="705.7" cy="485.8" r="14.2"/>
<circle cx="729.7" cy="432.9" r="14.1"/><circle class="h" cx="729.7" cy="432.9" r="14.1"/>
<circle cx="717.8" cy="459.3" r="14.2"/><circle class="h" cx="717.8" cy="459.3" r="14.2"/>
<circle cx="680.5" cy="186.4" r="14.1"/><circle class="h" cx="680.5" cy="186.4" r="14.1"/>
<circle cx="542.0" cy="456.8" r="14.1"/><circle class="h" cx="542.0" cy="456.8" r="14.1"/>
<circle cx="611.5" cy="572.5" r="14.5"/><circle class="h" cx="611.5" cy="572.5" r="14.5"/>
<circle cx="409.2" cy="266.2" r="14.3"/><circle class="h" cx="409.2" cy="266.2" r="14.3"/>
<circle cx="652.8" cy="542.3" r="14.4"/><circle class="h" cx="652.8" cy="542.3" r="14.4"/>
<circle cx="737.4" cy="356.9" r="14.0"/><circle class="h" cx="737.4" cy="356.9" r="14.0"/>
<circle cx="513.0" cy="459.6" r="14.2"/><circle class="h" cx="513.0" cy="459.6" r="14.2"/>
<circle cx="804.6" cy="242.1" r="14.3"/><circle class="h" cx="804.6" cy="242.1" r="14.3"/>
<circle cx="396.4" cy="292.4" r="14.4"/><circle class="h" cx="396.4" cy="292.4" r="14.4"/>
<circle cx="665.1" cy="515.4" r="14.3"/><circle class="h" cx="665.1" cy="515.4" r="14.3"/>
<circle cx="525.5" cy="433.2" r="14.1"/><circle class="h" cx="525.5" cy="433.2" r="14.1"/>
<circle cx="426.0" cy="290.2" r="14.3"/><circle class="h" cx="426.0" cy="290.2" r="14.3"/>
<circle cx="725.5" cy="383.0" r="14.1"/><circle class="h" cx="725.5" cy="383.0" r="14.1"/>
<circle cx="496.5" cy="435.9" r="14.2"/><circle class="h" cx="496.5" cy="435.9" r="14.2"/>
<circle cx="635.8" cy="164.3" r="14.1"/><circle class="h" cx="635.8" cy="164.3" r="14.1"/>
<circle cx="413.2" cy="316.5" r="14.3"/><circle class="h" cx="413.2" cy="316.5" r="14.3"/>
<circle cx="623.9" cy="545.4" r="14.4"/><circle class="h" cx="623.9" cy="545.4" r="14.4"/>
<circle cx="677.3" cy="488.7" r="14.3"/><circle class="h" cx="677.3" cy="488.7" r="14.3"/>
<circle cx="755.7" cy="169.7" r="14.3"/><circle class="h" cx="755.7" cy="169.7" r="14.3"/>
<circle cx="713.5" cy="409.2" r="14.1"/><circle class="h" cx="713.5" cy="409.2" r="14.1"/>
<circle cx="479.9" cy="412.1" r="14.2"/><circle class="h" cx="479.9" cy="412.1" r="14.2"/>
<circle cx="509.0" cy="409.5" r="14.1"/><circle class="h" cx="509.0" cy="409.5" r="14.1"/>
<circle cx="652.1" cy="188.3" r="14.1"/><circle class="h" cx="652.1" cy="188.3" r="14.1"/>
<circle cx="429.9" cy="340.5" r="14.3"/><circle class="h" cx="429.9" cy="340.5" r="14.3"/>
<circle cx="442.7" cy="314.2" r="14.2"/><circle class="h" cx="442.7" cy="314.2" r="14.2"/>
<circle cx="689.4" cy="462.1" r="14.2"/><circle class="h" cx="689.4" cy="462.1" r="14.2"/>
<circle cx="701.5" cy="435.6" r="14.2"/><circle class="h" cx="701.5" cy="435.6" r="14.2"/>
<circle cx="463.3" cy="388.3" r="14.2"/><circle class="h" cx="463.3" cy="388.3" r="14.2"/>
<circle cx="446.6" cy="364.4" r="14.3"/><circle class="h" cx="446.6" cy="364.4" r="14.3"/>
<circle cx="492.5" cy="385.8" r="14.2"/><circle class="h" cx="492.5" cy="385.8" r="14.2"/>
<circle cx="459.3" cy="338.1" r="14.2"/><circle class="h" cx="459.3" cy="338.1" r="14.2"/>
<circle cx="475.9" cy="362.0" r="14.2"/><circle class="h" cx="475.9" cy="362.0" r="14.2"/>
<circle cx="594.8" cy="548.6" r="14.5"/><circle class="h" cx="594.8" cy="548.6" r="14.5"/>
<circle cx="792.7" cy="268.2" r="14.3"/><circle class="h" cx="792.7" cy="268.2" r="14.3"/>
<circle cx="607.1" cy="166.0" r="14.2"/><circle class="h" cx="607.1" cy="166.0" r="14.2"/>
<circle cx="623.5" cy="190.1" r="14.2"/><circle class="h" cx="623.5" cy="190.1" r="14.2"/>
<circle cx="607.3" cy="521.5" r="14.4"/><circle class="h" cx="607.3" cy="521.5" r="14.4"/>
<circle cx="370.2" cy="180.4" r="14.8"/><circle class="h" cx="370.2" cy="180.4" r="14.8"/>
<circle cx="578.3" cy="167.8" r="14.2"/><circle class="h" cx="578.3" cy="167.8" r="14.2"/>
<circle cx="727.3" cy="171.5" r="14.4"/><circle class="h" cx="727.3" cy="171.5" r="14.4"/>
<circle cx="780.8" cy="294.5" r="14.3"/><circle class="h" cx="780.8" cy="294.5" r="14.3"/>
<circle cx="821.1" cy="178.8" r="14.6"/><circle class="h" cx="821.1" cy="178.8" r="14.6"/>
<circle cx="578.1" cy="524.6" r="14.5"/><circle class="h" cx="578.1" cy="524.6" r="14.5"/>
<circle cx="356.9" cy="207.1" r="14.8"/><circle class="h" cx="356.9" cy="207.1" r="14.8"/>
<circle cx="400.6" cy="178.6" r="14.7"/><circle class="h" cx="400.6" cy="178.6" r="14.7"/>
<circle cx="549.2" cy="169.5" r="14.3"/><circle class="h" cx="549.2" cy="169.5" r="14.3"/>
<circle cx="594.8" cy="191.9" r="14.2"/><circle class="h" cx="594.8" cy="191.9" r="14.2"/>
<circle cx="430.8" cy="176.7" r="14.6"/><circle class="h" cx="430.8" cy="176.7" r="14.6"/>
<circle cx="519.9" cy="171.3" r="14.4"/><circle class="h" cx="519.9" cy="171.3" r="14.4"/>
<circle cx="764.4" cy="270.3" r="14.3"/><circle class="h" cx="764.4" cy="270.3" r="14.3"/>
<circle cx="460.7" cy="174.9" r="14.5"/><circle class="h" cx="460.7" cy="174.9" r="14.5"/>
<circle cx="590.6" cy="497.5" r="14.4"/><circle class="h" cx="590.6" cy="497.5" r="14.4"/>
<circle cx="490.4" cy="173.1" r="14.5"/><circle class="h" cx="490.4" cy="173.1" r="14.5"/>
<circle cx="387.4" cy="205.2" r="14.7"/><circle class="h" cx="387.4" cy="205.2" r="14.7"/>
<circle cx="565.8" cy="193.8" r="14.3"/><circle class="h" cx="565.8" cy="193.8" r="14.3"/>
<circle cx="645.5" cy="591.9" r="14.9"/><circle class="h" cx="645.5" cy="591.9" r="14.9"/>
<circle cx="768.8" cy="320.8" r="14.3"/><circle class="h" cx="768.8" cy="320.8" r="14.3"/>
<circle cx="561.3" cy="500.5" r="14.5"/><circle class="h" cx="561.3" cy="500.5" r="14.5"/>
<circle cx="374.2" cy="231.9" r="14.8"/><circle class="h" cx="374.2" cy="231.9" r="14.8"/>
<circle cx="417.7" cy="203.2" r="14.6"/><circle class="h" cx="417.7" cy="203.2" r="14.6"/>
<circle cx="536.6" cy="195.6" r="14.3"/><circle class="h" cx="536.6" cy="195.6" r="14.3"/>
<circle cx="698.6" cy="173.2" r="14.4"/><circle class="h" cx="698.6" cy="173.2" r="14.4"/>
<circle cx="447.8" cy="201.3" r="14.6"/><circle class="h" cx="447.8" cy="201.3" r="14.6"/>
<circle cx="507.2" cy="197.5" r="14.4"/><circle class="h" cx="507.2" cy="197.5" r="14.4"/>
<circle cx="477.6" cy="199.4" r="14.5"/><circle class="h" cx="477.6" cy="199.4" r="14.5"/>
<circle cx="658.1" cy="564.2" r="14.8"/><circle class="h" cx="658.1" cy="564.2" r="14.8"/>
<circle cx="752.4" cy="296.7" r="14.3"/><circle class="h" cx="752.4" cy="296.7" r="14.3"/>
<circle cx="573.9" cy="473.5" r="14.4"/><circle class="h" cx="573.9" cy="473.5" r="14.4"/>
<circle cx="809.1" cy="205.3" r="14.6"/><circle class="h" cx="809.1" cy="205.3" r="14.6"/>
<circle cx="404.6" cy="229.9" r="14.7"/><circle class="h" cx="404.6" cy="229.9" r="14.7"/>
<circle cx="756.7" cy="347.3" r="14.3"/><circle class="h" cx="756.7" cy="347.3" r="14.3"/>
<circle cx="792.4" cy="180.7" r="14.7"/><circle class="h" cx="792.4" cy="180.7" r="14.7"/>
<circle cx="544.5" cy="476.4" r="14.5"/><circle class="h" cx="544.5" cy="476.4" r="14.5"/>
<circle cx="391.4" cy="256.6" r="14.7"/><circle class="h" cx="391.4" cy="256.6" r="14.7"/>
<circle cx="670.7" cy="536.6" r="14.7"/><circle class="h" cx="670.7" cy="536.6" r="14.7"/>
<circle cx="744.6" cy="374.0" r="14.4"/><circle class="h" cx="744.6" cy="374.0" r="14.4"/>
<circle cx="628.5" cy="567.5" r="14.8"/><circle class="h" cx="628.5" cy="567.5" r="14.8"/>
<circle cx="557.2" cy="449.4" r="14.4"/><circle class="h" cx="557.2" cy="449.4" r="14.4"/>
<circle cx="421.7" cy="254.5" r="14.6"/><circle class="h" cx="421.7" cy="254.5" r="14.6"/>
<circle cx="740.3" cy="323.2" r="14.3"/><circle class="h" cx="740.3" cy="323.2" r="14.3"/>
<circle cx="669.7" cy="175.1" r="14.4"/><circle class="h" cx="669.7" cy="175.1" r="14.4"/>
<circle cx="683.1" cy="509.2" r="14.6"/><circle class="h" cx="683.1" cy="509.2" r="14.6"/>
<circle cx="527.7" cy="452.2" r="14.5"/><circle class="h" cx="527.7" cy="452.2" r="14.5"/>
<circle cx="686.3" cy="199.5" r="14.4"/><circle class="h" cx="686.3" cy="199.5" r="14.4"/>
<circle cx="408.6" cy="281.3" r="14.7"/><circle class="h" cx="408.6" cy="281.3" r="14.7"/>
<circle cx="732.4" cy="400.8" r="14.4"/><circle class="h" cx="732.4" cy="400.8" r="14.4"/>
<circle cx="695.6" cy="481.9" r="14.6"/><circle class="h" cx="695.6" cy="481.9" r="14.6"/>
<circle cx="720.2" cy="427.7" r="14.5"/><circle class="h" cx="720.2" cy="427.7" r="14.5"/>
<circle cx="707.9" cy="454.7" r="14.5"/><circle class="h" cx="707.9" cy="454.7" r="14.5"/>
<circle cx="540.4" cy="425.3" r="14.4"/><circle class="h" cx="540.4" cy="425.3" r="14.4"/>
<circle cx="438.8" cy="279.1" r="14.6"/><circle class="h" cx="438.8" cy="279.1" r="14.6"/>
<circle cx="641.2" cy="539.8" r="14.8"/><circle class="h" cx="641.2" cy="539.8" r="14.8"/>
<circle cx="796.9" cy="232.0" r="14.6"/><circle class="h" cx="796.9" cy="232.0" r="14.6"/>
<circle cx="728.1" cy="349.8" r="14.4"/><circle class="h" cx="728.1" cy="349.8" r="14.4"/>
<circle cx="510.8" cy="428.0" r="14.5"/><circle class="h" cx="510.8" cy="428.0" r="14.5"/>
<circle cx="425.8" cy="305.9" r="14.6"/><circle class="h" cx="425.8" cy="305.9" r="14.6"/>
<circle cx="523.6" cy="401.0" r="14.4"/><circle class="h" cx="523.6" cy="401.0" r="14.4"/>
<circle cx="455.9" cy="303.6" r="14.5"/><circle class="h" cx="455.9" cy="303.6" r="14.5"/>
<circle cx="493.9" cy="403.7" r="14.5"/><circle class="h" cx="493.9" cy="403.7" r="14.5"/>
<circle cx="640.6" cy="176.9" r="14.5"/><circle class="h" cx="640.6" cy="176.9" r="14.5"/>
<circle cx="442.9" cy="330.4" r="14.6"/><circle class="h" cx="442.9" cy="330.4" r="14.6"/>
<circle cx="653.8" cy="512.2" r="14.7"/><circle class="h" cx="653.8" cy="512.2" r="14.7"/>
<circle cx="763.5" cy="182.5" r="14.7"/><circle class="h" cx="763.5" cy="182.5" r="14.7"/>
<circle cx="715.9" cy="376.5" r="14.4"/><circle class="h" cx="715.9" cy="376.5" r="14.4"/>
<circle cx="476.9" cy="379.3" r="14.5"/><circle class="h" cx="476.9" cy="379.3" r="14.5"/>
<circle cx="459.9" cy="354.9" r="14.6"/><circle class="h" cx="459.9" cy="354.9" r="14.6"/>
<circle cx="506.7" cy="376.8" r="14.5"/><circle class="h" cx="506.7" cy="376.8" r="14.5"/>
<circle cx="472.9" cy="328.1" r="14.5"/><circle class="h" cx="472.9" cy="328.1" r="14.5"/>
<circle cx="611.5" cy="543.0" r="14.8"/><circle class="h" cx="611.5" cy="543.0" r="14.8"/>
<circle cx="657.3" cy="201.4" r="14.4"/><circle class="h" cx="657.3" cy="201.4" r="14.4"/>
<circle cx="489.8" cy="352.4" r="14.5"/><circle class="h" cx="489.8" cy="352.4" r="14.5"/>
<circle cx="666.3" cy="484.8" r="14.6"/><circle class="h" cx="666.3" cy="484.8" r="14.6"/>
<circle cx="703.6" cy="403.4" r="14.5"/><circle class="h" cx="703.6" cy="403.4" r="14.5"/>
<circle cx="678.8" cy="457.6" r="14.6"/><circle class="h" cx="678.8" cy="457.6" r="14.6"/>
<circle cx="691.2" cy="430.4" r="14.5"/><circle class="h" cx="691.2" cy="430.4" r="14.5"/>
<circle cx="624.2" cy="515.3" r="14.7"/><circle class="h" cx="624.2" cy="515.3" r="14.7"/>
<circle cx="784.7" cy="258.7" r="14.6"/><circle class="h" cx="784.7" cy="258.7" r="14.6"/>
<circle cx="611.3" cy="178.7" r="14.5"/><circle class="h" cx="611.3" cy="178.7" r="14.5"/>
<circle cx="628.1" cy="203.3" r="14.5"/><circle class="h" cx="628.1" cy="203.3" r="14.5"/>
<circle cx="768.0" cy="234.0" r="14.7"/><circle class="h" cx="768.0" cy="234.0" r="14.7"/>
<circle cx="594.5" cy="518.5" r="14.8"/><circle class="h" cx="594.5" cy="518.5" r="14.8"/>
<circle cx="368.6" cy="193.8" r="15.2"/><circle class="h" cx="368.6" cy="193.8" r="15.2"/>
<circle cx="581.7" cy="180.5" r="14.6"/><circle class="h" cx="581.7" cy="180.5" r="14.6"/>
<circle cx="734.4" cy="184.4" r="14.7"/><circle class="h" cx="734.4" cy="184.4" r="14.7"/>
<circle cx="772.4" cy="285.6" r="14.7"/><circle class="h" cx="772.4" cy="285.6" r="14.7"/>
<circle cx="607.2" cy="490.8" r="14.7"/><circle class="h" cx="607.2" cy="490.8" r="14.7"/>
<circle cx="598.6" cy="205.3" r="14.5"/><circle class="h" cx="598.6" cy="205.3" r="14.5"/>
<circle cx="399.8" cy="191.9" r="15.1"/><circle class="h" cx="399.8" cy="191.9" r="15.1"/>
<circle cx="552.0" cy="182.4" r="14.6"/><circle class="h" cx="552.0" cy="182.4" r="14.6"/>
<circle cx="430.7" cy="190.0" r="15.0"/><circle class="h" cx="430.7" cy="190.0" r="15.0"/>
<circle cx="522.0" cy="184.3" r="14.7"/><circle class="h" cx="522.0" cy="184.3" r="14.7"/>
<circle cx="577.3" cy="493.9" r="14.8"/><circle class="h" cx="577.3" cy="493.9" r="14.8"/>
<circle cx="755.7" cy="260.9" r="14.7"/><circle class="h" cx="755.7" cy="260.9" r="14.7"/>
<circle cx="386.3" cy="219.2" r="15.1"/><circle class="h" cx="386.3" cy="219.2" r="15.1"/>
<circle cx="461.3" cy="188.1" r="14.9"/><circle class="h" cx="461.3" cy="188.1" r="14.9"/>
<circle cx="491.8" cy="186.2" r="14.8"/><circle class="h" cx="491.8" cy="186.2" r="14.8"/>
<circle cx="569.0" cy="207.2" r="14.6"/><circle class="h" cx="569.0" cy="207.2" r="14.6"/>
<circle cx="760.1" cy="312.7" r="14.7"/><circle class="h" cx="760.1" cy="312.7" r="14.7"/>
<circle cx="590.2" cy="466.3" r="14.7"/><circle class="h" cx="590.2" cy="466.3" r="14.7"/>
<circle cx="417.3" cy="217.2" r="15.0"/><circle class="h" cx="417.3" cy="217.2" r="15.0"/>
<circle cx="539.1" cy="209.2" r="14.7"/><circle class="h" cx="539.1" cy="209.2" r="14.7"/>
<circle cx="721.9" cy="211.2" r="14.7"/><circle class="h" cx="721.9" cy="211.2" r="14.7"/>
<circle cx="705.0" cy="186.3" r="14.7"/><circle class="h" cx="705.0" cy="186.3" r="14.7"/>
<circle cx="448.1" cy="215.1" r="14.9"/><circle class="h" cx="448.1" cy="215.1" r="14.9"/>
<circle cx="509.0" cy="211.1" r="14.7"/><circle class="h" cx="509.0" cy="211.1" r="14.7"/>
<circle cx="478.7" cy="213.1" r="14.8"/><circle class="h" cx="478.7" cy="213.1" r="14.8"/>
<circle cx="560.2" cy="469.2" r="14.8"/><circle class="h" cx="560.2" cy="469.2" r="14.8"/>
<circle cx="403.9" cy="244.5" r="15.0"/><circle class="h" cx="403.9" cy="244.5" r="15.0"/>
<circle cx="801.3" cy="194.0" r="15.0"/><circle class="h" cx="801.3" cy="194.0" r="15.0"/>
<circle cx="743.3" cy="287.9" r="14.7"/><circle class="h" cx="743.3" cy="287.9" r="14.7"/>
<circle cx="646.3" cy="562.2" r="15.2"/><circle class="h" cx="646.3" cy="562.2" r="15.2"/>
<circle cx="747.7" cy="339.8" r="14.7"/><circle class="h" cx="747.7" cy="339.8" r="14.7"/>
<circle cx="573.1" cy="441.6" r="14.7"/><circle class="h" cx="573.1" cy="441.6" r="14.7"/>
<circle cx="434.8" cy="242.4" r="14.9"/><circle class="h" cx="434.8" cy="242.4" r="14.9"/>
<circle cx="543.0" cy="444.5" r="14.8"/><circle class="h" cx="543.0" cy="444.5" r="14.8"/>
<circle cx="421.4" cy="269.7" r="15.0"/><circle class="h" cx="421.4" cy="269.7" r="15.0"/>
<circle cx="659.2" cy="533.9" r="15.1"/><circle class="h" cx="659.2" cy="533.9" r="15.1"/>
<circle cx="675.5" cy="188.2" r="14.8"/><circle class="h" cx="675.5" cy="188.2" r="14.8"/>
<circle cx="735.3" cy="367.2" r="14.7"/><circle class="h" cx="735.3" cy="367.2" r="14.7"/>
<circle cx="692.5" cy="213.2" r="14.7"/><circle class="h" cx="692.5" cy="213.2" r="14.7"/>
<circle cx="556.0" cy="417.0" r="14.7"/><circle class="h" cx="556.0" cy="417.0" r="14.7"/>
<circle cx="452.2" cy="267.5" r="14.9"/><circle class="h" cx="452.2" cy="267.5" r="14.9"/>
<circle cx="730.8" cy="315.0" r="14.7"/><circle class="h" cx="730.8" cy="315.0" r="14.7"/>
<circle cx="525.8" cy="419.7" r="14.8"/><circle class="h" cx="525.8" cy="419.7" r="14.8"/>
<circle cx="438.9" cy="294.9" r="14.9"/><circle class="h" cx="438.9" cy="294.9" r="14.9"/>
<circle cx="672.1" cy="505.8" r="15.0"/><circle class="h" cx="672.1" cy="505.8" r="15.0"/>
<circle cx="722.8" cy="394.6" r="14.8"/><circle class="h" cx="722.8" cy="394.6" r="14.8"/>
<circle cx="538.8" cy="392.2" r="14.7"/><circle class="h" cx="538.8" cy="392.2" r="14.7"/>
<circle cx="469.6" cy="292.6" r="14.8"/><circle class="h" cx="469.6" cy="292.6" r="14.8"/>
<circle cx="788.8" cy="221.3" r="15.0"/><circle class="h" cx="788.8" cy="221.3" r="15.0"/>
<circle cx="684.8" cy="477.8" r="14.9"/><circle class="h" cx="684.8" cy="477.8" r="14.9"/>
<circle cx="508.5" cy="394.9" r="14.8"/><circle class="h" cx="508.5" cy="394.9" r="14.8"/>
<circle cx="710.2" cy="422.2" r="14.8"/><circle class="h" cx="710.2" cy="422.2" r="14.8"/>
<circle cx="456.4" cy="320.0" r="14.9"/><circle class="h" cx="456.4" cy="320.0" r="14.9"/>
<circle cx="629.0" cy="537.2" r="15.1"/><circle class="h" cx="629.0" cy="537.2" r="15.1"/>
<circle cx="697.5" cy="449.9" r="14.9"/><circle class="h" cx="697.5" cy="449.9" r="14.9"/>
<circle cx="521.6" cy="367.4" r="14.8"/><circle class="h" cx="521.6" cy="367.4" r="14.8"/>
<circle cx="487.0" cy="317.6" r="14.8"/><circle class="h" cx="487.0" cy="317.6" r="14.8"/>
<circle cx="718.3" cy="342.3" r="14.7"/><circle class="h" cx="718.3" cy="342.3" r="14.7"/>
<circle cx="491.2" cy="370.0" r="14.8"/><circle class="h" cx="491.2" cy="370.0" r="14.8"/>
<circle cx="473.8" cy="345.0" r="14.9"/><circle class="h" cx="473.8" cy="345.0" r="14.9"/>
<circle cx="504.3" cy="342.5" r="14.8"/><circle class="h" cx="504.3" cy="342.5" r="14.8"/>
<circle cx="771.7" cy="196.0" r="15.0"/><circle class="h" cx="771.7" cy="196.0" r="15.0"/>
<circle cx="645.7" cy="190.1" r="14.8"/><circle class="h" cx="645.7" cy="190.1" r="14.8"/>
<circle cx="662.8" cy="215.2" r="14.8"/><circle class="h" cx="662.8" cy="215.2" r="14.8"/>
<circle cx="641.9" cy="508.9" r="15.1"/><circle class="h" cx="641.9" cy="508.9" r="15.1"/>
<circle cx="705.7" cy="369.7" r="14.8"/><circle class="h" cx="705.7" cy="369.7" r="14.8"/>
<circle cx="654.8" cy="480.8" r="15.0"/><circle class="h" cx="654.8" cy="480.8" r="15.0"/>
<circle cx="693.1" cy="397.3" r="14.8"/><circle class="h" cx="693.1" cy="397.3" r="14.8"/>
<circle cx="667.6" cy="452.8" r="14.9"/><circle class="h" cx="667.6" cy="452.8" r="14.9"/>
<circle cx="680.4" cy="425.0" r="14.9"/><circle class="h" cx="680.4" cy="425.0" r="14.9"/>
<circle cx="615.6" cy="192.0" r="14.9"/><circle class="h" cx="615.6" cy="192.0" r="14.9"/>
<circle cx="611.5" cy="512.1" r="15.1"/><circle class="h" cx="611.5" cy="512.1" r="15.1"/>
<circle cx="776.3" cy="248.8" r="15.0"/><circle class="h" cx="776.3" cy="248.8" r="15.0"/>
<circle cx="632.9" cy="217.2" r="14.8"/><circle class="h" cx="632.9" cy="217.2" r="14.8"/>
<circle cx="759.1" cy="223.4" r="15.0"/><circle class="h" cx="759.1" cy="223.4" r="15.0"/>
<circle cx="624.6" cy="483.9" r="15.0"/><circle class="h" cx="624.6" cy="483.9" r="15.0"/>
<circle cx="741.9" cy="198.0" r="15.1"/><circle class="h" cx="741.9" cy="198.0" r="15.1"/>
<circle cx="585.4" cy="193.9" r="14.9"/><circle class="h" cx="585.4" cy="193.9" r="14.9"/>
<circle cx="602.7" cy="219.2" r="14.9"/><circle class="h" cx="602.7" cy="219.2" r="14.9"/>
<circle cx="594.1" cy="486.9" r="15.1"/><circle class="h" cx="594.1" cy="486.9" r="15.1"/>
<circle cx="398.9" cy="205.9" r="15.4"/><circle class="h" cx="398.9" cy="205.9" r="15.4"/>
<circle cx="763.6" cy="276.4" r="15.0"/><circle class="h" cx="763.6" cy="276.4" r="15.0"/>
<circle cx="554.9" cy="195.9" r="15.0"/><circle class="h" cx="554.9" cy="195.9" r="15.0"/>
<circle cx="607.1" cy="458.7" r="15.0"/><circle class="h" cx="607.1" cy="458.7" r="15.0"/>
<circle cx="430.6" cy="203.9" r="15.3"/><circle class="h" cx="430.6" cy="203.9" r="15.3"/>
<circle cx="524.2" cy="197.9" r="15.1"/><circle class="h" cx="524.2" cy="197.9" r="15.1"/>
<circle cx="746.4" cy="251.0" r="15.0"/><circle class="h" cx="746.4" cy="251.0" r="15.0"/>
<circle cx="572.3" cy="221.3" r="14.9"/><circle class="h" cx="572.3" cy="221.3" r="14.9"/>
<circle cx="462.0" cy="201.8" r="15.2"/><circle class="h" cx="462.0" cy="201.8" r="15.2"/>
<circle cx="493.2" cy="199.8" r="15.1"/><circle class="h" cx="493.2" cy="199.8" r="15.1"/>
<circle cx="729.1" cy="225.5" r="15.1"/><circle class="h" cx="729.1" cy="225.5" r="15.1"/>
<circle cx="576.6" cy="461.7" r="15.1"/><circle class="h" cx="576.6" cy="461.7" r="15.1"/>
<circle cx="711.8" cy="199.9" r="15.1"/><circle class="h" cx="711.8" cy="199.9" r="15.1"/>
<circle cx="416.9" cy="231.8" r="15.4"/><circle class="h" cx="416.9" cy="231.8" r="15.4"/>
<circle cx="541.7" cy="223.4" r="15.0"/><circle class="h" cx="541.7" cy="223.4" r="15.0"/>
<circle cx="751.0" cy="304.1" r="15.1"/><circle class="h" cx="751.0" cy="304.1" r="15.1"/>
<circle cx="589.7" cy="433.5" r="15.0"/><circle class="h" cx="589.7" cy="433.5" r="15.0"/>
<circle cx="448.4" cy="229.6" r="15.3"/><circle class="h" cx="448.4" cy="229.6" r="15.3"/>
<circle cx="510.9" cy="225.4" r="15.1"/><circle class="h" cx="510.9" cy="225.4" r="15.1"/>
<circle cx="479.8" cy="227.5" r="15.2"/><circle class="h" cx="479.8" cy="227.5" r="15.2"/>
<circle cx="733.7" cy="278.6" r="15.1"/><circle class="h" cx="733.7" cy="278.6" r="15.1"/>
<circle cx="559.0" cy="436.4" r="15.1"/><circle class="h" cx="559.0" cy="436.4" r="15.1"/>
<circle cx="434.8" cy="257.6" r="15.3"/><circle class="h" cx="434.8" cy="257.6" r="15.3"/>
<circle cx="572.2" cy="408.3" r="15.0"/><circle class="h" cx="572.2" cy="408.3" r="15.0"/>
<circle cx="466.3" cy="255.4" r="15.2"/><circle class="h" cx="466.3" cy="255.4" r="15.2"/>
<circle cx="738.2" cy="332.0" r="15.1"/><circle class="h" cx="738.2" cy="332.0" r="15.1"/>
<circle cx="698.9" cy="227.6" r="15.1"/><circle class="h" cx="698.9" cy="227.6" r="15.1"/>
<circle cx="681.5" cy="201.9" r="15.1"/><circle class="h" cx="681.5" cy="201.9" r="15.1"/>
<circle cx="541.4" cy="411.1" r="15.1"/><circle class="h" cx="541.4" cy="411.1" r="15.1"/>
<circle cx="452.7" cy="283.3" r="15.3"/><circle class="h" cx="452.7" cy="283.3" r="15.3"/>
<circle cx="554.7" cy="383.0" r="15.1"/><circle class="h" cx="554.7" cy="383.0" r="15.1"/>
<circle cx="484.0" cy="281.0" r="15.2"/><circle class="h" cx="484.0" cy="281.0" r="15.2"/>
<circle cx="647.2" cy="531.1" r="15.5"/><circle class="h" cx="647.2" cy="531.1" r="15.5"/>
<circle cx="725.4" cy="360.0" r="15.1"/><circle class="h" cx="725.4" cy="360.0" r="15.1"/>
<circle cx="720.9" cy="306.5" r="15.1"/><circle class="h" cx="720.9" cy="306.5" r="15.1"/>
<circle cx="523.7" cy="385.7" r="15.1"/><circle class="h" cx="523.7" cy="385.7" r="15.1"/>
<circle cx="470.5" cy="309.0" r="15.2"/><circle class="h" cx="470.5" cy="309.0" r="15.2"/>
<circle cx="537.1" cy="357.6" r="15.1"/><circle class="h" cx="537.1" cy="357.6" r="15.1"/>
<circle cx="501.8" cy="306.6" r="15.1"/><circle class="h" cx="501.8" cy="306.6" r="15.1"/>
<circle cx="519.4" cy="332.1" r="15.1"/><circle class="h" cx="519.4" cy="332.1" r="15.1"/>
<circle cx="506.0" cy="360.2" r="15.2"/><circle class="h" cx="506.0" cy="360.2" r="15.2"/>
<circle cx="488.3" cy="334.6" r="15.2"/><circle class="h" cx="488.3" cy="334.6" r="15.2"/>
<circle cx="660.4" cy="502.2" r="15.4"/><circle class="h" cx="660.4" cy="502.2" r="15.4"/>
<circle cx="712.6" cy="388.1" r="15.2"/><circle class="h" cx="712.6" cy="388.1" r="15.2"/>
<circle cx="780.3" cy="210.1" r="15.4"/><circle class="h" cx="780.3" cy="210.1" r="15.4"/>
<circle cx="673.5" cy="473.4" r="15.3"/><circle class="h" cx="673.5" cy="473.4" r="15.3"/>
<circle cx="699.6" cy="416.4" r="15.2"/><circle class="h" cx="699.6" cy="416.4" r="15.2"/>
<circle cx="708.0" cy="334.5" r="15.1"/><circle class="h" cx="708.0" cy="334.5" r="15.1"/>
<circle cx="651.0" cy="203.9" r="15.2"/><circle class="h" cx="651.0" cy="203.9" r="15.2"/>
<circle cx="686.6" cy="444.9" r="15.3"/><circle class="h" cx="686.6" cy="444.9" r="15.3"/>
<circle cx="668.5" cy="229.7" r="15.1"/><circle class="h" cx="668.5" cy="229.7" r="15.1"/>
<circle cx="629.4" cy="505.4" r="15.5"/><circle class="h" cx="629.4" cy="505.4" r="15.5"/>
<circle cx="695.1" cy="362.6" r="15.2"/><circle class="h" cx="695.1" cy="362.6" r="15.2"/>
<circle cx="642.7" cy="476.5" r="15.4"/><circle class="h" cx="642.7" cy="476.5" r="15.4"/>
<circle cx="682.1" cy="390.9" r="15.2"/><circle class="h" cx="682.1" cy="390.9" r="15.2"/>
<circle cx="620.2" cy="206.0" r="15.2"/><circle class="h" cx="620.2" cy="206.0" r="15.2"/>
<circle cx="655.9" cy="447.8" r="15.3"/><circle class="h" cx="655.9" cy="447.8" r="15.3"/>
<circle cx="669.0" cy="419.3" r="15.3"/><circle class="h" cx="669.0" cy="419.3" r="15.3"/>
<circle cx="767.4" cy="238.3" r="15.4"/><circle class="h" cx="767.4" cy="238.3" r="15.4"/>
<circle cx="637.9" cy="231.8" r="15.2"/><circle class="h" cx="637.9" cy="231.8" r="15.2"/>
<circle cx="749.7" cy="212.2" r="15.4"/><circle class="h" cx="749.7" cy="212.2" r="15.4"/>
<circle cx="611.6" cy="479.7" r="15.4"/><circle class="h" cx="611.6" cy="479.7" r="15.4"/>
<circle cx="589.2" cy="208.0" r="15.3"/><circle class="h" cx="589.2" cy="208.0" r="15.3"/>
<circle cx="624.9" cy="450.8" r="15.4"/><circle class="h" cx="624.9" cy="450.8" r="15.4"/>
<circle cx="607.0" cy="233.9" r="15.3"/><circle class="h" cx="607.0" cy="233.9" r="15.3"/>
<circle cx="558.0" cy="210.1" r="15.4"/><circle class="h" cx="558.0" cy="210.1" r="15.4"/>
<circle cx="754.4" cy="266.6" r="15.4"/><circle class="h" cx="754.4" cy="266.6" r="15.4"/>
<circle cx="593.7" cy="453.9" r="15.4"/><circle class="h" cx="593.7" cy="453.9" r="15.4"/>
<circle cx="430.5" cy="218.5" r="15.7"/><circle class="h" cx="430.5" cy="218.5" r="15.7"/>
<circle cx="526.5" cy="212.1" r="15.4"/><circle class="h" cx="526.5" cy="212.1" r="15.4"/>
<circle cx="575.8" cy="236.1" r="15.3"/><circle class="h" cx="575.8" cy="236.1" r="15.3"/>
<circle cx="736.7" cy="240.5" r="15.5"/><circle class="h" cx="736.7" cy="240.5" r="15.5"/>
<circle cx="607.1" cy="425.1" r="15.4"/><circle class="h" cx="607.1" cy="425.1" r="15.4"/>
<circle cx="462.7" cy="216.3" r="15.6"/><circle class="h" cx="462.7" cy="216.3" r="15.6"/>
<circle cx="494.7" cy="214.2" r="15.5"/><circle class="h" cx="494.7" cy="214.2" r="15.5"/>
<circle cx="718.9" cy="214.3" r="15.5"/><circle class="h" cx="718.9" cy="214.3" r="15.5"/>
<circle cx="544.4" cy="238.3" r="15.4"/><circle class="h" cx="544.4" cy="238.3" r="15.4"/>
<circle cx="575.7" cy="428.0" r="15.4"/><circle class="h" cx="575.7" cy="428.0" r="15.4"/>
<circle cx="448.8" cy="244.9" r="15.7"/><circle class="h" cx="448.8" cy="244.9" r="15.7"/>
<circle cx="512.8" cy="240.5" r="15.5"/><circle class="h" cx="512.8" cy="240.5" r="15.5"/>
<circle cx="741.3" cy="295.0" r="15.5"/><circle class="h" cx="741.3" cy="295.0" r="15.5"/>
<circle cx="589.2" cy="399.2" r="15.4"/><circle class="h" cx="589.2" cy="399.2" r="15.4"/>
<circle cx="480.9" cy="242.7" r="15.6"/><circle class="h" cx="480.9" cy="242.7" r="15.6"/>
<circle cx="723.6" cy="268.9" r="15.5"/><circle class="h" cx="723.6" cy="268.9" r="15.5"/>
<circle cx="557.7" cy="402.0" r="15.4"/><circle class="h" cx="557.7" cy="402.0" r="15.4"/>
<circle cx="571.3" cy="373.3" r="15.4"/><circle class="h" cx="571.3" cy="373.3" r="15.4"/>
<circle cx="467.1" cy="271.3" r="15.6"/><circle class="h" cx="467.1" cy="271.3" r="15.6"/>
<circle cx="499.1" cy="268.9" r="15.5"/><circle class="h" cx="499.1" cy="268.9" r="15.5"/>
<circle cx="705.7" cy="242.7" r="15.5"/><circle class="h" cx="705.7" cy="242.7" r="15.5"/>
<circle cx="553.3" cy="347.3" r="15.4"/><circle class="h" cx="553.3" cy="347.3" r="15.4"/>
<circle cx="517.2" cy="295.1" r="15.5"/><circle class="h" cx="517.2" cy="295.1" r="15.5"/>
<circle cx="728.2" cy="323.6" r="15.5"/><circle class="h" cx="728.2" cy="323.6" r="15.5"/>
<circle cx="687.9" cy="216.4" r="15.5"/><circle class="h" cx="687.9" cy="216.4" r="15.5"/>
<circle cx="539.7" cy="376.0" r="15.5"/><circle class="h" cx="539.7" cy="376.0" r="15.5"/>
<circle cx="485.3" cy="297.6" r="15.6"/><circle class="h" cx="485.3" cy="297.6" r="15.6"/>
<circle cx="535.3" cy="321.3" r="15.4"/><circle class="h" cx="535.3" cy="321.3" r="15.4"/>
<circle cx="521.6" cy="349.9" r="15.5"/><circle class="h" cx="521.6" cy="349.9" r="15.5"/>
<circle cx="503.5" cy="323.8" r="15.5"/><circle class="h" cx="503.5" cy="323.8" r="15.5"/>
<circle cx="710.4" cy="297.5" r="15.5"/><circle class="h" cx="710.4" cy="297.5" r="15.5"/>
<circle cx="715.1" cy="352.4" r="15.5"/><circle class="h" cx="715.1" cy="352.4" r="15.5"/>
<circle cx="648.1" cy="498.4" r="15.8"/><circle class="h" cx="648.1" cy="498.4" r="15.8"/>
<circle cx="701.8" cy="381.3" r="15.6"/><circle class="h" cx="701.8" cy="381.3" r="15.6"/>
<circle cx="674.5" cy="244.9" r="15.5"/><circle class="h" cx="674.5" cy="244.9" r="15.5"/>
<circle cx="656.6" cy="218.5" r="15.6"/><circle class="h" cx="656.6" cy="218.5" r="15.6"/>
<circle cx="697.1" cy="326.2" r="15.5"/><circle class="h" cx="697.1" cy="326.2" r="15.5"/>
<circle cx="661.6" cy="468.9" r="15.7"/><circle class="h" cx="661.6" cy="468.9" r="15.7"/>
<circle cx="688.5" cy="410.3" r="15.6"/><circle class="h" cx="688.5" cy="410.3" r="15.6"/>
<circle cx="675.1" cy="439.5" r="15.7"/><circle class="h" cx="675.1" cy="439.5" r="15.7"/>
<circle cx="683.8" cy="355.0" r="15.6"/><circle class="h" cx="683.8" cy="355.0" r="15.6"/>
<circle cx="625.0" cy="220.7" r="15.6"/><circle class="h" cx="625.0" cy="220.7" r="15.6"/>
<circle cx="643.1" cy="247.2" r="15.6"/><circle class="h" cx="643.1" cy="247.2" r="15.6"/>
<circle cx="629.9" cy="472.1" r="15.8"/><circle class="h" cx="629.9" cy="472.1" r="15.8"/>
<circle cx="670.4" cy="384.1" r="15.6"/><circle class="h" cx="670.4" cy="384.1" r="15.6"/>
<circle cx="758.0" cy="227.2" r="15.8"/><circle class="h" cx="758.0" cy="227.2" r="15.8"/>
<circle cx="643.5" cy="442.6" r="15.7"/><circle class="h" cx="643.5" cy="442.6" r="15.7"/>
<circle cx="657.0" cy="413.2" r="15.7"/><circle class="h" cx="657.0" cy="413.2" r="15.7"/>
<circle cx="593.2" cy="222.8" r="15.7"/><circle class="h" cx="593.2" cy="222.8" r="15.7"/>
<circle cx="611.4" cy="249.4" r="15.6"/><circle class="h" cx="611.4" cy="249.4" r="15.6"/>
<circle cx="611.6" cy="445.6" r="15.8"/><circle class="h" cx="611.6" cy="445.6" r="15.8"/>
<circle cx="625.2" cy="416.2" r="15.7"/><circle class="h" cx="625.2" cy="416.2" r="15.7"/>
<circle cx="561.2" cy="225.0" r="15.8"/><circle class="h" cx="561.2" cy="225.0" r="15.8"/>
<circle cx="744.6" cy="256.3" r="15.9"/><circle class="h" cx="744.6" cy="256.3" r="15.9"/>
<circle cx="579.5" cy="251.7" r="15.7"/><circle class="h" cx="579.5" cy="251.7" r="15.7"/>
<circle cx="528.9" cy="227.2" r="15.8"/><circle class="h" cx="528.9" cy="227.2" r="15.8"/>
<circle cx="726.4" cy="229.4" r="15.9"/><circle class="h" cx="726.4" cy="229.4" r="15.9"/>
<circle cx="593.2" cy="419.1" r="15.8"/><circle class="h" cx="593.2" cy="419.1" r="15.8"/>
<circle cx="607.0" cy="389.7" r="15.7"/><circle class="h" cx="607.0" cy="389.7" r="15.7"/>
<circle cx="463.5" cy="231.6" r="16.0"/><circle class="h" cx="463.5" cy="231.6" r="16.0"/>
<circle cx="496.3" cy="229.4" r="15.9"/><circle class="h" cx="496.3" cy="229.4" r="15.9"/>
<circle cx="547.3" cy="254.0" r="15.8"/><circle class="h" cx="547.3" cy="254.0" r="15.8"/>
<circle cx="588.6" cy="363.2" r="15.7"/><circle class="h" cx="588.6" cy="363.2" r="15.7"/>
<circle cx="514.9" cy="256.3" r="15.9"/><circle class="h" cx="514.9" cy="256.3" r="15.9"/>
<circle cx="574.8" cy="392.6" r="15.8"/><circle class="h" cx="574.8" cy="392.6" r="15.8"/>
<circle cx="482.1" cy="258.6" r="16.0"/><circle class="h" cx="482.1" cy="258.6" r="16.0"/>
<circle cx="731.2" cy="285.5" r="15.9"/><circle class="h" cx="731.2" cy="285.5" r="15.9"/>
<circle cx="570.3" cy="336.6" r="15.8"/><circle class="h" cx="570.3" cy="336.6" r="15.8"/>
<circle cx="533.4" cy="283.1" r="15.8"/><circle class="h" cx="533.4" cy="283.1" r="15.8"/>
<circle cx="551.9" cy="309.9" r="15.8"/><circle class="h" cx="551.9" cy="309.9" r="15.8"/>
<circle cx="556.4" cy="365.9" r="15.8"/><circle class="h" cx="556.4" cy="365.9" r="15.8"/>
<circle cx="500.8" cy="285.6" r="15.9"/><circle class="h" cx="500.8" cy="285.6" r="15.9"/>
<circle cx="712.9" cy="258.6" r="15.9"/><circle class="h" cx="712.9" cy="258.6" r="15.9"/>
<circle cx="537.9" cy="339.2" r="15.8"/><circle class="h" cx="537.9" cy="339.2" r="15.8"/>
<circle cx="519.4" cy="312.4" r="15.9"/><circle class="h" cx="519.4" cy="312.4" r="15.9"/>
<circle cx="694.5" cy="231.7" r="15.9"/><circle class="h" cx="694.5" cy="231.7" r="15.9"/>
<circle cx="717.7" cy="314.8" r="15.9"/><circle class="h" cx="717.7" cy="314.8" r="15.9"/>
<circle cx="699.3" cy="287.9" r="15.9"/><circle class="h" cx="699.3" cy="287.9" r="15.9"/>
<circle cx="704.1" cy="344.4" r="15.9"/><circle class="h" cx="704.1" cy="344.4" r="15.9"/>
<circle cx="680.9" cy="260.9" r="15.9"/><circle class="h" cx="680.9" cy="260.9" r="15.9"/>
<circle cx="662.4" cy="233.9" r="16.0"/><circle class="h" cx="662.4" cy="233.9" r="16.0"/>
<circle cx="690.4" cy="374.1" r="16.0"/><circle class="h" cx="690.4" cy="374.1" r="16.0"/>
<circle cx="685.7" cy="317.4" r="15.9"/><circle class="h" cx="685.7" cy="317.4" r="15.9"/>
<circle cx="649.1" cy="464.1" r="16.2"/><circle class="h" cx="649.1" cy="464.1" r="16.2"/>
<circle cx="676.7" cy="403.9" r="16.0"/><circle class="h" cx="676.7" cy="403.9" r="16.0"/>
<circle cx="662.9" cy="433.9" r="16.1"/><circle class="h" cx="662.9" cy="433.9" r="16.1"/>
<circle cx="672.0" cy="347.1" r="16.0"/><circle class="h" cx="672.0" cy="347.1" r="16.0"/>
<circle cx="648.7" cy="263.3" r="16.0"/><circle class="h" cx="648.7" cy="263.3" r="16.0"/>
<circle cx="630.1" cy="236.1" r="16.0"/><circle class="h" cx="630.1" cy="236.1" r="16.0"/>
<circle cx="658.2" cy="376.9" r="16.0"/><circle class="h" cx="658.2" cy="376.9" r="16.0"/>
<circle cx="630.4" cy="437.0" r="16.2"/><circle class="h" cx="630.4" cy="437.0" r="16.2"/>
<circle cx="644.3" cy="406.9" r="16.1"/><circle class="h" cx="644.3" cy="406.9" r="16.1"/>
<circle cx="597.5" cy="238.4" r="16.1"/><circle class="h" cx="597.5" cy="238.4" r="16.1"/>
<circle cx="616.2" cy="265.7" r="16.1"/><circle class="h" cx="616.2" cy="265.7" r="16.1"/>
<circle cx="625.6" cy="379.8" r="16.1"/><circle class="h" cx="625.6" cy="379.8" r="16.1"/>
<circle cx="611.6" cy="409.9" r="16.2"/><circle class="h" cx="611.6" cy="409.9" r="16.2"/>
<circle cx="564.6" cy="240.7" r="16.2"/><circle class="h" cx="564.6" cy="240.7" r="16.2"/>
<circle cx="583.4" cy="268.1" r="16.1"/><circle class="h" cx="583.4" cy="268.1" r="16.1"/>
<circle cx="734.3" cy="245.4" r="16.3"/><circle class="h" cx="734.3" cy="245.4" r="16.3"/>
<circle cx="606.9" cy="352.6" r="16.1"/><circle class="h" cx="606.9" cy="352.6" r="16.1"/>
<circle cx="531.4" cy="243.0" r="16.2"/><circle class="h" cx="531.4" cy="243.0" r="16.2"/>
<circle cx="592.8" cy="382.6" r="16.2"/><circle class="h" cx="592.8" cy="382.6" r="16.2"/>
<circle cx="498.0" cy="245.4" r="16.3"/><circle class="h" cx="498.0" cy="245.4" r="16.3"/>
<circle cx="588.1" cy="325.3" r="16.1"/><circle class="h" cx="588.1" cy="325.3" r="16.1"/>
<circle cx="550.3" cy="270.5" r="16.2"/><circle class="h" cx="550.3" cy="270.5" r="16.2"/>
<circle cx="569.2" cy="298.0" r="16.2"/><circle class="h" cx="569.2" cy="298.0" r="16.2"/>
<circle cx="573.9" cy="355.3" r="16.2"/><circle class="h" cx="573.9" cy="355.3" r="16.2"/>
<circle cx="517.0" cy="273.0" r="16.3"/><circle class="h" cx="517.0" cy="273.0" r="16.3"/>
<circle cx="555.0" cy="328.0" r="16.2"/><circle class="h" cx="555.0" cy="328.0" r="16.2"/>
<circle cx="536.0" cy="300.5" r="16.2"/><circle class="h" cx="536.0" cy="300.5" r="16.2"/>
<circle cx="720.4" cy="275.4" r="16.3"/><circle class="h" cx="720.4" cy="275.4" r="16.3"/>
<circle cx="701.6" cy="247.7" r="16.3"/><circle class="h" cx="701.6" cy="247.7" r="16.3"/>
<circle cx="706.5" cy="305.6" r="16.4"/><circle class="h" cx="706.5" cy="305.6" r="16.4"/>
<circle cx="687.6" cy="277.9" r="16.4"/><circle class="h" cx="687.6" cy="277.9" r="16.4"/>
<circle cx="668.7" cy="250.1" r="16.4"/><circle class="h" cx="668.7" cy="250.1" r="16.4"/>
<circle cx="692.5" cy="335.9" r="16.4"/><circle class="h" cx="692.5" cy="335.9" r="16.4"/>
<circle cx="678.4" cy="366.4" r="16.4"/><circle class="h" cx="678.4" cy="366.4" r="16.4"/>
<circle cx="673.5" cy="308.2" r="16.4"/><circle class="h" cx="673.5" cy="308.2" r="16.4"/>
<circle cx="664.3" cy="397.1" r="16.5"/><circle class="h" cx="664.3" cy="397.1" r="16.5"/>
<circle cx="654.5" cy="280.4" r="16.4"/><circle class="h" cx="654.5" cy="280.4" r="16.4"/>
<circle cx="650.1" cy="428.0" r="16.6"/><circle class="h" cx="650.1" cy="428.0" r="16.6"/>
<circle cx="635.4" cy="252.5" r="16.5"/><circle class="h" cx="635.4" cy="252.5" r="16.5"/>
<circle cx="659.4" cy="338.7" r="16.4"/><circle class="h" cx="659.4" cy="338.7" r="16.4"/>
<circle cx="645.2" cy="369.3" r="16.5"/><circle class="h" cx="645.2" cy="369.3" r="16.5"/>
<circle cx="630.9" cy="400.1" r="16.6"/><circle class="h" cx="630.9" cy="400.1" r="16.6"/>
<circle cx="621.1" cy="282.9" r="16.5"/><circle class="h" cx="621.1" cy="282.9" r="16.5"/>
<circle cx="601.9" cy="254.9" r="16.5"/><circle class="h" cx="601.9" cy="254.9" r="16.5"/>
<circle cx="626.0" cy="341.4" r="16.5"/><circle class="h" cx="626.0" cy="341.4" r="16.5"/>
<circle cx="611.6" cy="372.2" r="16.6"/><circle class="h" cx="611.6" cy="372.2" r="16.6"/>
<circle cx="606.8" cy="313.5" r="16.5"/><circle class="h" cx="606.8" cy="313.5" r="16.5"/>
<circle cx="568.2" cy="257.3" r="16.6"/><circle class="h" cx="568.2" cy="257.3" r="16.6"/>
<circle cx="587.5" cy="285.4" r="16.6"/><circle class="h" cx="587.5" cy="285.4" r="16.6"/>
<circle cx="592.3" cy="344.2" r="16.6"/><circle class="h" cx="592.3" cy="344.2" r="16.6"/>
<circle cx="534.1" cy="259.8" r="16.7"/><circle class="h" cx="534.1" cy="259.8" r="16.7"/>
<circle cx="573.0" cy="316.2" r="16.6"/><circle class="h" cx="573.0" cy="316.2" r="16.6"/>
<circle cx="553.6" cy="288.0" r="16.6"/><circle class="h" cx="553.6" cy="288.0" r="16.6"/>
<circle cx="709.0" cy="264.7" r="16.8"/><circle class="h" cx="709.0" cy="264.7" r="16.8"/>
<circle cx="694.7" cy="295.7" r="16.8"/><circle class="h" cx="694.7" cy="295.7" r="16.8"/>
<circle cx="675.2" cy="267.2" r="16.8"/><circle class="h" cx="675.2" cy="267.2" r="16.8"/>
<circle cx="680.2" cy="326.9" r="16.9"/><circle class="h" cx="680.2" cy="326.9" r="16.9"/>
<circle cx="660.7" cy="298.4" r="16.9"/><circle class="h" cx="660.7" cy="298.4" r="16.9"/>
<circle cx="665.7" cy="358.3" r="16.9"/><circle class="h" cx="665.7" cy="358.3" r="16.9"/>
<circle cx="641.1" cy="269.7" r="16.9"/><circle class="h" cx="641.1" cy="269.7" r="16.9"/>
<circle cx="651.1" cy="389.9" r="17.0"/><circle class="h" cx="651.1" cy="389.9" r="17.0"/>
<circle cx="646.1" cy="329.7" r="16.9"/><circle class="h" cx="646.1" cy="329.7" r="16.9"/>
<circle cx="626.4" cy="301.0" r="16.9"/><circle class="h" cx="626.4" cy="301.0" r="16.9"/>
<circle cx="631.4" cy="361.3" r="17.0"/><circle class="h" cx="631.4" cy="361.3" r="17.0"/>
<circle cx="606.7" cy="272.3" r="17.0"/><circle class="h" cx="606.7" cy="272.3" r="17.0"/>
<circle cx="611.6" cy="332.5" r="17.0"/><circle class="h" cx="611.6" cy="332.5" r="17.0"/>
<circle cx="591.8" cy="303.7" r="17.0"/><circle class="h" cx="591.8" cy="303.7" r="17.0"/>
<circle cx="571.9" cy="274.9" r="17.1"/><circle class="h" cx="571.9" cy="274.9" r="17.1"/>
<circle cx="682.1" cy="285.3" r="17.3"/><circle class="h" cx="682.1" cy="285.3" r="17.3"/>
<circle cx="667.2" cy="317.4" r="17.4"/><circle class="h" cx="667.2" cy="317.4" r="17.4"/>
<circle cx="647.1" cy="288.0" r="17.4"/><circle class="h" cx="647.1" cy="288.0" r="17.4"/>
<circle cx="652.2" cy="349.7" r="17.4"/><circle class="h" cx="652.2" cy="349.7" r="17.4"/>
<circle cx="632.0" cy="320.3" r="17.4"/><circle class="h" cx="632.0" cy="320.3" r="17.4"/>
<circle cx="611.7" cy="290.7" r="17.5"/><circle class="h" cx="611.7" cy="290.7" r="17.5"/>
<circle cx="653.4" cy="307.3" r="17.9"/><circle class="h" cx="653.4" cy="307.3" r="17.9"/>
</g>
<g stroke="#fff" stroke-width="1" fill="none">
<path d="M351.0 168.4L676.0 293.7L879.1 137.2L590.2 61.2Z M676.0 293.7L662.5 616.2L834.7 420.7L879.1 137.2"/>
</g>

<g stroke-width="1" fill="none">
<path d="M39.8 598.4L39.8 575" stroke="#6a6aff"/>
<path d="M36.5 579.5L39.8 576L43.1 579.5" stroke="#6a6aff"/>
<path d="M39.8 598.4L57.2 587" stroke="#00e000"/>
<path d="M53.5 586.5L57.2 587L55.8 590" stroke="#00e000"/>
<path d="M39.8 598.4L62.9 607.3" stroke="#ff0000"/>
<path d="M60 604.5L62.9 607.3L59.5 609.5" stroke="#ff0000"/>
</g>
<text x="36.8" y="575.5" font-size="10.5" fill="#6a6aff" font-family="Liberation Sans">z</text>
<text x="58.8" y="591.5" font-size="11.5" fill="#00e000" font-family="Liberation Sans">y</text>
<text x="66" y="616" font-size="11" fill="#ff0000" font-family="Liberation Sans">x</text>

</svg>
<div class="a" style="left:0;top:713px;width:1222px;height:395px;background:#ececec"></div>
<div class="a" style="left:494px;top:714px;width:195px;height:19px;border-radius:5px;background:#fff;box-shadow:0 0 0 0.5px #c9c9c9,0 0.5px 1.5px #bdbdbd"></div>
<div class="a" style="left:494px;top:714px;width:73px;height:19px;border-radius:5px 0 0 5px;background:linear-gradient(#3a92f8,#1a76ef)"></div>
<div class="t" style="left:503px;top:717px;color:#fff;font-size:13px;letter-spacing:0.15px">Particles</div>
<div class="t" style="left:579px;top:717px;color:#222;font-size:13px;letter-spacing:0.35px">Global Attributes</div>
<svg style="left:1203px;top:717px" width="14" height="10" viewBox="0 0 14 10"><path d="M2.5 2.5L7 6.5L11.5 2.5" stroke="#555" stroke-width="1.5" fill="none"/></svg>
<svg style="left:0;top:737px" width="95" height="22" viewBox="0 737 95 22">
<circle cx="14" cy="748" r="6.2" fill="none" stroke="#505050" stroke-width="1.4"/>
<path d="M14 741.5V746M14 750V754.5M7.5 748H12M16 748H20.5" stroke="#505050" stroke-width="1.6"/>
<path d="M40.5 741.5L50.5 752" stroke="#505050" stroke-width="1.3"/>
<circle cx="40.5" cy="741.5" r="1.9" fill="#505050"/><circle cx="50.8" cy="752.3" r="2.1" fill="#505050"/>
<path d="M72.5 742L83.5 753M83.5 742L72.5 753" stroke="#505050" stroke-width="1.6"/>
</svg>
<div class="a" style="left:93px;top:737px;width:1129px;height:21px;background:#fff;border:1px solid #cfcfcf;border-right:0"></div>
<div class="t" style="left:95px;top:742px;color:#bdbdbd;font-size:13px">Filter...</div>
<div class="a" style="left:0;top:762px;width:1222px;height:273px;background:#fff;border-top:1px solid #9a9a9a;border-left:1px solid #a8a8a8;border-bottom:1px solid #b8b8b8;overflow:hidden">
<div class="a" style="left:0;top:0;width:1221px;height:21px;background:#ebebeb"></div>
<div class="a" style="left:0;top:0;width:38px;height:272px;background:#ebebeb"></div>
<div class="a" style="left:38px;top:2px;width:1px;height:17px;background:#d0d0d0"></div>
<div class="t" style="left:38px;top:5px;width:100px;text-align:center;font-size:12px;color:#262626;letter-spacing:0.1px">Particle Type</div>
<div class="a" style="left:138px;top:2px;width:1px;height:17px;background:#d0d0d0"></div>
<div class="t" style="left:138px;top:5px;width:100px;text-align:center;font-size:12px;color:#262626;letter-spacing:0.1px">Position</div>
<div class="a" style="left:238px;top:2px;width:1px;height:17px;background:#d0d0d0"></div>
<div class="t" style="left:238px;top:5px;width:100px;text-align:center;font-size:12px;color:#262626;letter-spacing:0.1px">Force</div>
<div class="a" style="left:338px;top:2px;width:1px;height:17px;background:#d0d0d0"></div>
<div class="t" style="left:338px;top:5px;width:100px;text-align:center;font-size:12px;color:#262626;letter-spacing:0.1px">Velocity</div>
<div class="a" style="left:438px;top:2px;width:1px;height:17px;background:#d0d0d0"></div>
<div class="t" style="left:5px;top:30px;font-size:11.5px;color:#262626">0</div>
<div class="a" style="left:3px;top:50px;width:35px;height:1px;background:#c4c4c4"></div>
<div class="a" style="left:138px;top:21px;width:1px;height:30px;background:#e2e2e2"></div>
<div class="a" style="left:238px;top:21px;width:1px;height:30px;background:#e2e2e2"></div>
<div class="a" style="left:338px;top:21px;width:1px;height:30px;background:#e2e2e2"></div>
<div class="a" style="left:438px;top:21px;width:1px;height:30px;background:#e2e2e2"></div>
<div class="a" style="left:39px;top:50px;width:400px;height:1px;background:#e2e2e2"></div>
<div class="a" style="left:44px;top:27px;width:16px;height:16px;background:#bfa6a6"></div>
<div class="t" style="left:65px;top:29px;font-size:13px;color:#1a1a1a;letter-spacing:0.1px">1 (Al)</div>
<div class="t" style="left:144px;top:29px;font-size:13px;color:#1a1a1a;letter-spacing:0.45px">0.00824444...</div>
<div class="t" style="left:244px;top:29px;font-size:13px;color:#1a1a1a;letter-spacing:0.45px">-0.123195 -0...</div>
<div class="t" style="left:344px;top:29px;font-size:13px;color:#1a1a1a;letter-spacing:0.45px">0.00520206 ...</div>
<div class="t" style="left:5px;top:60px;font-size:11.5px;color:#262626">1</div>
<div class="a" style="left:3px;top:80px;width:35px;height:1px;background:#c4c4c4"></div>
<div class="a" style="left:138px;top:51px;width:1px;height:30px;background:#e2e2e2"></div>
<div class="a" style="left:238px;top:51px;width:1px;height:30px;background:#e2e2e2"></div>
<div class="a" style="left:338px;top:51px;width:1px;height:30px;background:#e2e2e2"></div>
<div class="a" style="left:438px;top:51px;width:1px;height:30px;background:#e2e2e2"></div>
<div class="a" style="left:39px;top:80px;width:400px;height:1px;background:#e2e2e2"></div>
<div class="a" style="left:44px;top:57px;width:16px;height:16px;background:#bfa6a6"></div>
<div class="t" style="left:65px;top:59px;font-size:13px;color:#1a1a1a;letter-spacing:0.1px">1 (Al)</div>
<div class="t" style="left:144px;top:59px;font-size:13px;color:#1a1a1a;letter-spacing:0.45px">-0.10539 1.9...</div>
<div class="t" style="left:244px;top:59px;font-size:13px;color:#1a1a1a;letter-spacing:0.45px">0.906052 0....</div>
<div class="t" style="left:344px;top:59px;font-size:13px;color:#1a1a1a;letter-spacing:0.45px">-7.96951e-0...</div>
<div class="t" style="left:5px;top:90px;font-size:11.5px;color:#262626">2</div>
<div class="a" style="left:3px;top:110px;width:35px;height:1px;background:#c4c4c4"></div>
<div class="a" style="left:138px;top:81px;width:1px;height:30px;background:#e2e2e2"></div>
<div class="a" style="left:238px;top:81px;width:1px;height:30px;background:#e2e2e2"></div>
<div class="a" style="left:338px;top:81px;width:1px;height:30px;background:#e2e2e2"></div>
<div class="a" style="left:438px;top:81px;width:1px;height:30px;background:#e2e2e2"></div>
<div class="a" style="left:39px;top:110px;width:400px;height:1px;background:#e2e2e2"></div>
<div class="a" style="left:44px;top:87px;width:16px;height:16px;background:#bfa6a6"></div>
<div class="t" style="left:65px;top:89px;font-size:13px;color:#1a1a1a;letter-spacing:0.1px">1 (Al)</div>
<div class="t" style="left:144px;top:89px;font-size:13px;color:#1a1a1a;letter-spacing:0.45px">2.08804 0.1...</div>
<div class="t" style="left:244px;top:89px;font-size:13px;color:#1a1a1a;letter-spacing:0.45px">-0.0934611 ...</div>
<div class="t" style="left:344px;top:89px;font-size:13px;color:#1a1a1a;letter-spacing:0.45px">0.00590772 ...</div>
<div class="t" style="left:5px;top:120px;font-size:11.5px;color:#262626">3</div>
<div class="a" style="left:3px;top:140px;width:35px;height:1px;background:#c4c4c4"></div>
<div class="a" style="left:138px;top:111px;width:1px;height:30px;background:#e2e2e2"></div>
<div class="a" style="left:238px;top:111px;width:1px;height:30px;background:#e2e2e2"></div>
<div class="a" style="left:338px;top:111px;width:1px;height:30px;background:#e2e2e2"></div>
<div class="a" style="left:438px;top:111px;width:1px;height:30px;background:#e2e2e2"></div>
<div class="a" style="left:39px;top:140px;width:400px;height:1px;background:#e2e2e2"></div>
<div class="a" style="left:44px;top:117px;width:16px;height:16px;background:#bfa6a6"></div>
<div class="t" style="left:65px;top:119px;font-size:13px;color:#1a1a1a;letter-spacing:0.1px">1 (Al)</div>
<div class="t" style="left:144px;top:119px;font-size:13px;color:#1a1a1a;letter-spacing:0.45px">2.06887 2.0...</div>
<div class="t" style="left:244px;top:119px;font-size:13px;color:#1a1a1a;letter-spacing:0.45px">0.170134 0.0...</div>
<div class="t" style="left:344px;top:119px;font-size:13px;color:#1a1a1a;letter-spacing:0.45px">0.00251126 ...</div>
<div class="t" style="left:5px;top:150px;font-size:11.5px;color:#262626">4</div>
<div class="a" style="left:3px;top:170px;width:35px;height:1px;background:#c4c4c4"></div>
<div class="a" style="left:138px;top:141px;width:1px;height:30px;background:#e2e2e2"></div>
<div class="a" style="left:238px;top:141px;width:1px;height:30px;background:#e2e2e2"></div>
<div class="a" style="left:338px;top:141px;width:1px;height:30px;background:#e2e2e2"></div>
<div class="a" style="left:438px;top:141px;width:1px;height:30px;background:#e2e2e2"></div>
<div class="a" style="left:39px;top:170px;width:400px;height:1px;background:#e2e2e2"></div>
<div class="a" style="left:44px;top:147px;width:16px;height:16px;background:#bfa6a6"></div>
<div class="t" style="left:65px;top:149px;font-size:13px;color:#1a1a1a;letter-spacing:0.1px">1 (Al)</div>
<div class="t" style="left:144px;top:149px;font-size:13px;color:#1a1a1a;letter-spacing:0.45px">0.126069 4.1...</div>
<div class="t" style="left:244px;top:149px;font-size:13px;color:#1a1a1a;letter-spacing:0.45px">-0.394199 -...</div>
<div class="t" style="left:344px;top:149px;font-size:13px;color:#1a1a1a;letter-spacing:0.45px">-0.0044784...</div>
<div class="t" style="left:5px;top:180px;font-size:11.5px;color:#262626">5</div>
<div class="a" style="left:3px;top:200px;width:35px;height:1px;background:#c4c4c4"></div>
<div class="a" style="left:138px;top:171px;width:1px;height:30px;background:#e2e2e2"></div>
<div class="a" style="left:238px;top:171px;width:1px;height:30px;background:#e2e2e2"></div>
<div class="a" style="left:338px;top:171px;width:1px;height:30px;background:#e2e2e2"></div>
<div class="a" style="left:438px;top:171px;width:1px;height:30px;background:#e2e2e2"></div>
<div class="a" style="left:39px;top:200px;width:400px;height:1px;background:#e2e2e2"></div>
<div class="a" style="left:44px;top:177px;width:16px;height:16px;background:#bfa6a6"></div>
<div class="t" style="left:65px;top:179px;font-size:13px;color:#1a1a1a;letter-spacing:0.1px">1 (Al)</div>
<div class="t" style="left:144px;top:179px;font-size:13px;color:#1a1a1a;letter-spacing:0.45px">0.0543607 5...</div>
<div class="t" style="left:244px;top:179px;font-size:13px;color:#1a1a1a;letter-spacing:0.45px">-0.274756 0....</div>
<div class="t" style="left:344px;top:179px;font-size:13px;color:#1a1a1a;letter-spacing:0.45px">0.00311618 ...</div>
<div class="t" style="left:5px;top:210px;font-size:11.5px;color:#262626">6</div>
<div class="a" style="left:3px;top:230px;width:35px;height:1px;background:#c4c4c4"></div>
<div class="a" style="left:138px;top:201px;width:1px;height:30px;background:#e2e2e2"></div>
<div class="a" style="left:238px;top:201px;width:1px;height:30px;background:#e2e2e2"></div>
<div class="a" style="left:338px;top:201px;width:1px;height:30px;background:#e2e2e2"></div>
<div class="a" style="left:438px;top:201px;width:1px;height:30px;background:#e2e2e2"></div>
<div class="a" style="left:39px;top:230px;width:400px;height:1px;background:#e2e2e2"></div>
<div class="a" style="left:44px;top:207px;width:16px;height:16px;background:#bfa6a6"></div>
<div class="t" style="left:65px;top:209px;font-size:13px;color:#1a1a1a;letter-spacing:0.1px">1 (Al)</div>
<div class="t" style="left:144px;top:209px;font-size:13px;color:#1a1a1a;letter-spacing:0.45px">2.12851 4.00...</div>
<div class="t" style="left:244px;top:209px;font-size:13px;color:#1a1a1a;letter-spacing:0.45px">-0.467211 -0...</div>
<div class="t" style="left:344px;top:209px;font-size:13px;color:#1a1a1a;letter-spacing:0.45px">0.00127289 ...</div>
<div class="t" style="left:5px;top:240px;font-size:11.5px;color:#262626">7</div>
<div class="a" style="left:3px;top:260px;width:35px;height:1px;background:#c4c4c4"></div>
<div class="a" style="left:138px;top:231px;width:1px;height:30px;background:#e2e2e2"></div>
<div class="a" style="left:238px;top:231px;width:1px;height:30px;background:#e2e2e2"></div>
<div class="a" style="left:338px;top:231px;width:1px;height:30px;background:#e2e2e2"></div>
<div class="a" style="left:438px;top:231px;width:1px;height:30px;background:#e2e2e2"></div>
<div class="a" style="left:39px;top:260px;width:400px;height:1px;background:#e2e2e2"></div>
<div class="a" style="left:44px;top:237px;width:16px;height:16px;background:#bfa6a6"></div>
<div class="t" style="left:65px;top:239px;font-size:13px;color:#1a1a1a;letter-spacing:0.1px">1 (Al)</div>
<div class="t" style="left:144px;top:239px;font-size:13px;color:#1a1a1a;letter-spacing:0.45px">1.98175 6.20...</div>
<div class="t" style="left:244px;top:239px;font-size:13px;color:#1a1a1a;letter-spacing:0.45px">0.671816 -0....</div>
<div class="t" style="left:344px;top:239px;font-size:13px;color:#1a1a1a;letter-spacing:0.45px">0.00256449...</div>
<div class="t" style="left:5px;top:270px;font-size:11.5px;color:#262626">8</div>
<div class="a" style="left:3px;top:290px;width:35px;height:1px;background:#c4c4c4"></div>
<div class="a" style="left:138px;top:261px;width:1px;height:30px;background:#e2e2e2"></div>
<div class="a" style="left:238px;top:261px;width:1px;height:30px;background:#e2e2e2"></div>
<div class="a" style="left:338px;top:261px;width:1px;height:30px;background:#e2e2e2"></div>
<div class="a" style="left:438px;top:261px;width:1px;height:30px;background:#e2e2e2"></div>
<div class="a" style="left:39px;top:290px;width:400px;height:1px;background:#e2e2e2"></div>
<div class="a" style="left:44px;top:267px;width:16px;height:16px;background:#bfa6a6"></div>
<div class="t" style="left:65px;top:269px;font-size:13px;color:#1a1a1a;letter-spacing:0.1px">1 (Al)</div>
<div class="t" style="left:144px;top:269px;font-size:13px;color:#1a1a1a;letter-spacing:0.45px">-0.0309944...</div>
<div class="t" style="left:244px;top:269px;font-size:13px;color:#1a1a1a;letter-spacing:0.45px">0.170370 -0...</div>
<div class="t" style="left:344px;top:269px;font-size:13px;color:#1a1a1a;letter-spacing:0.45px">0.00171318 ...</div>
</div>
<div class="a" style="left:0;top:1037px;width:897px;height:1px;background:#b4b4b4"></div>
<svg style="left:0;top:1036px" width="897" height="72" viewBox="0 1036 897 72"><path d="M45.5 1061V1076.5M53.6 1061V1068.5M61.6 1061V1068.5M69.7 1061V1068.5M77.7 1061V1068.5M85.8 1061V1076.5M93.8 1061V1068.5M101.9 1061V1068.5M109.9 1061V1068.5M118.0 1061V1068.5M126.0 1061V1076.5M134.1 1061V1068.5M142.1 1061V1068.5M150.2 1061V1068.5M158.2 1061V1068.5M166.3 1061V1076.5M174.3 1061V1068.5M182.4 1061V1068.5M190.5 1061V1068.5M198.5 1061V1068.5M206.6 1061V1076.5M214.6 1061V1068.5M222.7 1061V1068.5M230.7 1061V1068.5M238.8 1061V1068.5M246.8 1061V1076.5M254.9 1061V1068.5M262.9 1061V1068.5M271.0 1061V1068.5M279.0 1061V1068.5M287.1 1061V1076.5M295.1 1061V1068.5M303.2 1061V1068.5M311.2 1061V1068.5M319.3 1061V1068.5M327.4 1061V1076.5M335.4 1061V1068.5M343.5 1061V1068.5M351.5 1061V1068.5M359.6 1061V1068.5M367.6 1061V1076.5M375.7 1061V1068.5M383.7 1061V1068.5M391.8 1061V1068.5M399.8 1061V1068.5M407.9 1061V1076.5M415.9 1061V1068.5M424.0 1061V1068.5M432.0 1061V1068.5M440.1 1061V1068.5M448.2 1061V1076.5M456.2 1061V1068.5M464.3 1061V1068.5M472.3 1061V1068.5M480.4 1061V1068.5M488.4 1061V1076.5M496.5 1061V1068.5M504.5 1061V1068.5M512.6 1061V1068.5M520.6 1061V1068.5M528.7 1061V1076.5M536.7 1061V1068.5M544.8 1061V1068.5M552.8 1061V1068.5M560.9 1061V1068.5M568.9 1061V1076.5M577.0 1061V1068.5M585.1 1061V1068.5M593.1 1061V1068.5M601.2 1061V1068.5M609.2 1061V1076.5M617.3 1061V1068.5M625.3 1061V1068.5M633.4 1061V1068.5M641.4 1061V1068.5M649.5 1061V1076.5M657.5 1061V1068.5M665.6 1061V1068.5M673.6 1061V1068.5M681.7 1061V1068.5M689.7 1061V1076.5M697.8 1061V1068.5M705.8 1061V1068.5M713.9 1061V1068.5M722.0 1061V1068.5M730.0 1061V1076.5M738.1 1061V1068.5M746.1 1061V1068.5M754.2 1061V1068.5M762.2 1061V1068.5M770.3 1061V1076.5M778.3 1061V1068.5M786.4 1061V1068.5M794.4 1061V1068.5M802.5 1061V1068.5M810.5 1061V1076.5M818.6 1061V1068.5M826.6 1061V1068.5M834.7 1061V1068.5M842.7 1061V1068.5M850.8 1061V1076.5" stroke="#b0b0e0" stroke-width="1"/><g font-size="12.5" fill="#a9a9dc" text-anchor="middle" font-family="Liberation Sans"><text x="45.5" y="1055">0</text><text x="85.8" y="1055">5</text><text x="126.0" y="1055">10</text><text x="166.3" y="1055">15</text><text x="206.6" y="1055">20</text><text x="246.8" y="1055">25</text><text x="287.1" y="1055">30</text><text x="327.4" y="1055">35</text><text x="367.6" y="1055">40</text><text x="407.9" y="1055">45</text><text x="488.4" y="1055">55</text><text x="528.7" y="1055">60</text><text x="568.9" y="1055">65</text><text x="609.2" y="1055">70</text><text x="649.5" y="1055">75</text><text x="689.7" y="1055">80</text><text x="730.0" y="1055">85</text><text x="770.3" y="1055">90</text><text x="810.5" y="1055">95</text><text x="850.8" y="1055">100</text></g></svg>
<div class="a" style="left:403px;top:1039px;width:90px;height:22px;background:#d6d6d6;border:1px solid #c2c2c2;border-top-color:#fff;border-left-color:#fff"></div>
<div class="t" style="left:403px;top:1044px;width:90px;text-align:center;font-size:13.5px;color:#111">50 / 100</div>
<svg style="left:444px;top:1060.5px" width="10" height="6" viewBox="0 0 10 6"><path d="M1 0.5H8L4.5 4.5Z" fill="#1a1aff" stroke="#000" stroke-width="0.8"/></svg>
<div class="a" style="left:897px;top:1037px;width:325px;height:1px;background:#b4b4b4"></div>
<div class="a" style="left:896px;top:1036px;width:1px;height:72px;background:#c8c8c8"></div>
<div class="a" style="left:1108px;top:1036px;width:1px;height:72px;background:#cfcfcf"></div>
<svg style="left:897px;top:1036px" width="325" height="72" viewBox="897 1036 325 72">
<g fill="#4d4d4d">
<rect x="906" y="1048" width="2.8" height="16"/><path d="M909.5 1056L922 1048V1064Z"/>
<path d="M950.5 1056L962.5 1048V1064Z M962 1056L974 1048V1064Z"/>
<path d="M996.5 1047V1065L1011 1056Z"/>
<path d="M1030 1048V1064L1042 1056Z M1041.5 1048V1064L1053.5 1056Z"/>
<path d="M1081.5 1048V1064L1094 1056Z"/><rect x="1095.5" y="1048" width="2.8" height="16"/>
</g>
<path d="M938.5 1040V1072M1065.5 1040V1072" stroke="#777" stroke-width="1" stroke-dasharray="1 2"/>
<circle cx="1123.5" cy="1052.5" r="8" fill="none" stroke="#4d4d4d" stroke-width="2.2"/>
<path d="M1129 1058.5L1136 1066" stroke="#4d4d4d" stroke-width="2.6" stroke-linecap="round"/>
<path d="M1157 1066Q1153 1060 1153.5 1057Q1154 1054.5 1156.5 1056.5L1158 1058V1047Q1158 1045 1160 1045Q1161.5 1045 1161.5 1047V1044.5Q1161.5 1042.5 1163.3 1042.5Q1165 1042.5 1165 1044.5V1045.5Q1165 1043.5 1167 1043.5Q1168.5 1043.5 1168.5 1045.5V1047Q1168.5 1045.5 1170.5 1045.5Q1172.5 1045.5 1172.5 1047.5V1059Q1172.5 1064 1169.5 1068H1158.5Z" fill="#4d4d4d"/>
<ellipse cx="1204" cy="1055.5" rx="14.2" ry="7.2" fill="none" stroke="#4d4d4d" stroke-width="1.6"/>
<circle cx="1204" cy="1055.5" r="4.2" fill="#4d4d4d"/>
<path d="M1194 1047L1197.5 1049L1195 1051.5M1212.5 1060L1215 1063.5L1211 1063.5" stroke="#4d4d4d" stroke-width="1.4" fill="none"/>
<circle cx="908.5" cy="1091" r="5.2" fill="#4d4d4d"/><circle cx="908.5" cy="1091" r="1.8" fill="#ececec"/>
<path d="M912 1089.5H925V1092.5H922.5V1096H920V1092.5H918.5V1095H916V1092.5H912Z" fill="#4d4d4d"/>
<circle cx="1086" cy="1090.5" r="9.8" fill="none" stroke="#4d4d4d" stroke-width="1.7"/>
<path d="M1084.5 1085V1091L1089 1093.5" stroke="#4d4d4d" stroke-width="1.5" fill="none"/>
<path d="M1114 1082V1078.5H1117.5M1134.5 1078.5H1138V1082M1138 1100V1103.5H1134.5M1117.5 1103.5H1114V1100" stroke="#4d4d4d" stroke-width="1.3" fill="none"/>
<path d="M1116.5 1085.5L1126 1081L1135.5 1085.5V1096.5L1126 1101L1116.5 1096.5Z" fill="#4d4d4d"/>
<path d="M1118 1086.5L1126 1090.5L1134 1086.5M1126 1090.5V1100" stroke="#ececec" stroke-width="1.2" fill="none"/>
<path d="M1174.5 1079L1153.5 1091.5L1174.5 1102.5" stroke="#4d4d4d" stroke-width="1.8" fill="none"/>
<path d="M1164.5 1085.5Q1168 1091 1163.5 1097" stroke="#4d4d4d" stroke-width="1.5" fill="none"/>
</svg>
<div class="a" style="left:936px;top:1080px;width:112px;height:21px;background:#fff;border:1px solid #d0d0d0"></div>
<div class="t" style="left:938px;top:1084px;font-size:13.5px;color:#111">50</div>
<div class="a" style="left:1049px;top:1080px;width:15px;height:21px;background:#f6f6f6;border:1px solid #d8d8d8"></div>
<svg style="left:1049px;top:1080px" width="15" height="21" viewBox="0 0 15 21"><path d="M3.5 7.5H11.5L7.5 3Z M3.5 13.5H11.5L7.5 18Z" fill="#222"/><path d="M1 10.5H14" stroke="#d8d8d8"/></svg>
<div class="a" style="left:1186px;top:1074px;width:35px;height:34px;background:#cfcfcf;border-radius:4px 4px 0 0"></div>
<svg style="left:1186px;top:1074px" width="35" height="34" viewBox="1186 1074 35 34">
<g stroke="#4d4d4d" stroke-width="2" fill="none">
<path d="M1192 1080L1197.5 1085.5M1215 1080L1209.5 1085.5M1192 1102L1197.5 1096.5M1215 1102L1209.5 1096.5"/>
</g>
<g fill="#4d4d4d">
<path d="M1191 1079H1198L1191 1086Z M1216 1079H1209L1216 1086Z M1191 1103H1198L1191 1096Z M1216 1103H1209L1216 1096Z"/>
</g></svg>
<div class="a" style="left:1222px;top:70px;width:698px;height:1038px;background:#ececec"></div>
<div class="a" style="left:1222px;top:70px;width:1px;height:1038px;background:#a9a9a9"></div>
<div class="a" style="left:1226px;top:386px;width:1px;height:722px;background:#d2d2d2"></div>
<div class="a" style="left:1223px;top:70px;width:697px;height:24px;background:#bebebe;border-top:1px solid #a4a4a4;border-bottom:1px solid #a8a8a8"></div>
<div class="a" style="left:1223px;top:71px;width:79px;height:22px;background:#d2d2d2"></div>
<div class="a" style="left:1302px;top:71px;width:1px;height:22px;background:#a3a3a3"></div>
<div class="a" style="left:1382px;top:71px;width:1px;height:22px;background:#a3a3a3"></div>
<div class="a" style="left:1462px;top:71px;width:1px;height:22px;background:#a3a3a3"></div>
<svg style="left:1223px;top:70px" width="260" height="24" viewBox="1223 70 260 24">
<g fill="none" stroke="#4d4d4d" stroke-width="1.5">
<path d="M1237 75.5V86.5M1245.5 77.5Q1245.5 82.5 1237.5 84"/>
<circle cx="1237" cy="74.8" r="1.8"/><circle cx="1237" cy="87.5" r="1.8"/><circle cx="1245.5" cy="76.8" r="1.8"/>
</g>
<path d="M1315 77.5Q1315 76.3 1316.2 76.3H1318.5L1320 74.3H1325.5L1327 76.3H1329.5Q1331 76.3 1331 77.5V86.5Q1331 88 1329.5 88H1316.2Q1315 88 1315 86.5Z" fill="#4d4d4d"/>
<circle cx="1323" cy="82" r="3.2" fill="none" stroke="#bebebe" stroke-width="1.2"/>
<path d="M1403.5 75.5L1409.5 79.5L1403.5 83.5L1397.5 79.5Z" fill="#4d4d4d"/>
<path d="M1397.5 82L1403.5 86L1409.5 82" fill="none" stroke="#4d4d4d" stroke-width="1.3"/>
</svg>
<div class="a" style="left:1229px;top:98px;width:681px;height:21px;background:#fff;border-radius:5px;box-shadow:0 0 0 0.5px #c8c8c8,0 1px 1px #c4c4c4"></div>
<div class="t" style="left:1237px;top:102px;font-size:13px;color:#1e1e1e;letter-spacing:0.27px">Add modification...</div>
<div class="a" style="left:1892px;top:100px;width:17px;height:17px;background:linear-gradient(#3f8ef7,#1e6de6);border-radius:4px"></div>
<svg style="left:1892px;top:100px" width="17" height="17" viewBox="0 0 17 17"><path d="M5 6.5L8.5 3.5L12 6.5M5 10.5L8.5 13.5L12 10.5" stroke="#fff" stroke-width="1.5" fill="none"/></svg>
<div class="a" style="left:1226px;top:126px;width:655px;height:260px;background:#fff;border:1px solid #a9a9a9;border-right-color:#c4c4c4;border-bottom-color:#c4c4c4"></div>
<div class="a" style="left:1227px;top:127px;width:653px;height:14px;background:#f3f3f3"></div>
<div class="t" style="left:1227px;top:129px;width:653px;text-align:center;font-size:11px;color:#1b1bee;letter-spacing:0.15px">Visual elements</div>
<div class="a" style="left:1227px;top:245px;width:653px;height:14px;background:#f3f3f3"></div>
<div class="t" style="left:1227px;top:247px;width:653px;text-align:center;font-size:11px;color:#1b1bee;letter-spacing:0.15px">Data source</div>
<div class="a" style="left:1227px;top:259px;width:653px;height:26px;background:#0a4ad6"></div>
<div class="a" style="left:1234px;top:147px;width:14px;height:14px;border-radius:3.5px;background:linear-gradient(#3b8ff8,#1f74ee)"></div><svg style="left:1234px;top:147px" width="14" height="14" viewBox="0 0 14 14"><path d="M3.2 7.2L5.8 10L10.8 3.8" stroke="#fff" stroke-width="1.8" fill="none"/></svg>
<div class="t" style="left:1289px;top:148px;font-size:13px;color:#1e1e1e;letter-spacing:0px">Particles</div>
<div class="a" style="left:1234px;top:173px;width:14px;height:14px;border-radius:3.5px;background:#fff;box-shadow:inset 0 0 0 0.6px #c4c4c4,0 0.5px 0.5px #d0d0d0"></div>
<div class="t" style="left:1289px;top:174px;font-size:13px;color:#1e1e1e;letter-spacing:0px">Forces</div>
<div class="a" style="left:1234px;top:199px;width:14px;height:14px;border-radius:3.5px;background:#fff;box-shadow:inset 0 0 0 0.6px #c4c4c4,0 0.5px 0.5px #d0d0d0"></div>
<div class="t" style="left:1289px;top:200px;font-size:13px;color:#1e1e1e;letter-spacing:0px">Velocities</div>
<div class="a" style="left:1234px;top:225px;width:14px;height:14px;border-radius:3.5px;background:linear-gradient(#3b8ff8,#1f74ee)"></div><svg style="left:1234px;top:225px" width="14" height="14" viewBox="0 0 14 14"><path d="M3.2 7.2L5.8 10L10.8 3.8" stroke="#fff" stroke-width="1.8" fill="none"/></svg>
<div class="t" style="left:1289px;top:226px;font-size:13px;color:#1e1e1e;letter-spacing:0px">Simulation cell</div>
<div class="t" style="left:1260px;top:266px;font-size:13px;color:#fff;letter-spacing:0.1px">lmp.h5 [pyiron File Reader]</div>
<div class="t" style="left:1273px;top:292px;font-size:13px;color:#1e1e1e;letter-spacing:0px">Particle types</div>
<div class="t" style="left:1273px;top:318px;font-size:13px;color:#1e1e1e;letter-spacing:0px">Simulation cell</div>
<svg style="left:1882px;top:126px" width="38" height="210" viewBox="1882 126 38 210">
<path d="M1890 134.5H1909.5M1896 134.5V132.5H1903.5V134.5" stroke="#8a8a8a" stroke-width="1.8" fill="none"/>
<path d="M1891.5 137H1908L1907 153Q1907 155 1905 155H1894.5Q1892.5 155 1892.5 153Z" fill="#8a8a8a"/>
<path d="M1885 167.5H1917M1885 255.5H1917" stroke="#8a8a8a" stroke-width="1" stroke-dasharray="1 2"/>
<path d="M1893 196L1900.5 188.5L1908 196M1893 226.5L1900.5 234L1908 226.5" stroke="#999" stroke-width="2.6" fill="none"/>
<path d="M1888 272.5H1912M1896 280H1912M1896 287.5H1912" stroke="#999" stroke-width="2.6"/>
<path d="M1891 310Q1889.5 310 1889.5 311.5V328.5Q1889.5 330 1891 330H1909.5Q1911 330 1911 328.5V311.5Q1911 310 1909.5 310H1905.5V307.5Q1905.5 305.5 1903.5 305.5H1897Q1895 305.5 1895 307.5V310Z" fill="#4d4d4d"/>
<path d="M1894 315.5H1906.5M1894 320H1906.5M1894 324.5H1902.5" stroke="#ececec" stroke-width="1.5"/>
</svg>
<div class="a" style="left:1569px;top:388px;width:5px;height:5px;border-radius:3px;background:#d8d8d8"></div>
<div class="a" style="left:1226px;top:395px;width:692px;height:20px;background:#808080;border:1px solid #111"></div><div class="t" style="left:1226px;top:399px;width:672px;text-align:center;font-size:13px;color:#f4f4f4;letter-spacing:0.2px">External file</div>
<div class="a" style="left:1898px;top:396px;width:18px;height:18px;background:#508550;border-left:1px solid #111"></div>
<div class="t" style="left:1899px;top:399px;width:17px;text-align:center;font-size:12px;color:#eee">?</div>
<div class="a" style="left:1226px;top:414px;width:692px;height:362px;border:1px solid #cfcfcf;border-top:0"></div>
<svg style="left:1228px;top:418px" width="200" height="36" viewBox="1228 418 200 36">
<g fill="#4d4d4d">
<path d="M7 40Q7 38 9 38H16Q17.8 38 17.8 40V42H27.7Q29.7 42 29.7 44V47.5H15.5Q13.2 47.5 11.8 49.5L7 56.5Z" transform="translate(1226 387)"/>
<path d="M16.5 50H35L28.5 58.3Q27.4 59.7 26 59.7H8.2Z" transform="translate(1226 387)"/>
<g transform="translate(1219 387)"><circle cx="59.3" cy="51.6" r="6.3"/><circle cx="67" cy="48.6" r="8.8"/><circle cx="75" cy="52.2" r="6"/><rect x="59" y="50" width="16.5" height="8"/></g>
</g>
<path d="M64.3 45.5H69.5V50.7H72.6L66.9 56.3L61.2 50.7H64.3Z" fill="#ececec" transform="translate(1219 387)"/>
<path d="M1314 434.5Q1318 427 1326 427.5Q1331.5 428 1334 432M1336 439Q1333 447 1325 446.5Q1319.5 446 1317 442" fill="none" stroke="#4d4d4d" stroke-width="2.3"/>
<path d="M1311 436.5L1319 436.5L1315 440.5Z M1339.5 435.5H1331.5L1335.5 431.5Z" fill="#4d4d4d"/>
<path d="M1311.5 436L1318.5 436L1314.5 442Z M1339 436H1332L1336 431Z" fill="#4d4d4d"/>
<rect x="1357" y="422" width="21" height="24" fill="#4d4d4d"/>
<g fill="#ececec"><rect x="1359" y="424.5" width="2.2" height="2.8"/><rect x="1359" y="430" width="2.2" height="2.8"/><rect x="1359" y="435.5" width="2.2" height="2.8"/><rect x="1374" y="424.5" width="2.2" height="2.8"/><rect x="1374" y="430" width="2.2" height="2.8"/><rect x="1374" y="435.5" width="2.2" height="2.8"/><rect x="1374" y="441" width="2.2" height="2.8"/></g>
<circle cx="1357" cy="445" r="7.5" fill="#ececec"/>
<path d="M1351.5 445.5Q1352 440 1357 440Q1359.5 440 1361 442M1362.5 445Q1362 450.5 1357 450.5Q1354.5 450.5 1353 448.5" fill="none" stroke="#4d4d4d" stroke-width="1.4"/>
<path d="M1349.5 444.5H1354L1351.8 447.5Z M1364 446H1359.5L1361.8 443Z" fill="#4d4d4d"/>
<path d="M1392 432V446.5H1406M1396.5 428V441.5H1410" fill="none" stroke="#4d4d4d" stroke-width="2"/>
<rect x="1401" y="424" width="15" height="13" rx="2" fill="#4d4d4d"/>
<rect x="1403" y="427.5" width="11" height="6.5" fill="#ececec"/>
</svg>
<div class="t" style="left:1237px;top:460px;font-size:11.5px;color:#1e1e1e;letter-spacing:0.1px;">Data source</div>
<div class="a" style="left:1230px;top:471px;width:684px;height:59px;background:#e3e3e3;border:1px solid #dedede;border-radius:5px"></div>
<div class="t" style="left:1237px;top:484px;font-size:13px;color:#1e1e1e;letter-spacing:0.12px;">Current file:</div>
<div class="a" style="left:1356px;top:479px;width:551px;height:21px;background:#fff"></div>
<div class="t" style="left:1357px;top:484px;font-size:13px;color:#1e1e1e;letter-spacing:0.12px;">lmp.h5</div>
<div class="t" style="left:1237px;top:507px;font-size:13px;color:#1e1e1e;letter-spacing:0.12px;">Directory:</div>
<div class="a" style="left:1356px;top:502px;width:551px;height:21px;background:#fff"></div>
<div class="t" style="left:1357px;top:507px;font-size:13px;color:#1e1e1e;letter-spacing:0.12px;">/Users/daniel/Downloads</div>
<div class="t" style="left:1237px;top:536px;font-size:11.5px;color:#1e1e1e;letter-spacing:0.1px;">File sequence</div>
<div class="a" style="left:1230px;top:547px;width:684px;height:52px;background:#e3e3e3;border:1px solid #dedede;border-radius:5px"></div>
<div class="t" style="left:1237px;top:560px;font-size:13px;color:#1e1e1e;letter-spacing:0.12px;">Search pattern:</div>
<div class="a" style="left:1358px;top:556px;width:549px;height:20px;background:#fff;border:1px solid #d2d2d2;border-top-color:#c6c6c6"></div>
<div class="t" style="left:1360px;top:560px;font-size:13px;color:#1e1e1e;letter-spacing:0.12px;">lmp.h5</div>
<div class="a" style="left:1237px;top:579px;width:13px;height:13px;border-radius:3.5px;background:#fff;box-shadow:inset 0 0 0 0.6px #c4c4c4,0 0.5px 0.5px #d0d0d0"></div>
<div class="t" style="left:1255px;top:580px;font-size:13px;color:#1e1e1e;letter-spacing:0.3px;">auto-generate</div>
<div class="t" style="left:1358px;top:580px;font-size:11px;color:#1e1e1e;letter-spacing:0.35px;">Found 1 matching file</div>
<div class="t" style="left:1237px;top:605px;font-size:11.5px;color:#1e1e1e;letter-spacing:0.1px;">Trajectory</div>
<div class="a" style="left:1230px;top:616px;width:684px;height:83px;background:#e3e3e3;border:1px solid #dedede;border-radius:5px"></div>
<div class="t" style="left:1237px;top:632px;font-size:13px;color:#1e1e1e;letter-spacing:0.12px;">Current frame:</div>
<div class="a" style="left:1361px;top:626px;width:542px;height:21px;background:#fff;border-radius:5px;box-shadow:0 0 0 0.5px #c8c8c8,0 1px 1px #c4c4c4"></div>
<div class="t" style="left:1369px;top:630px;font-size:13px;color:#1e1e1e;letter-spacing:0.12px;">lmp: 500</div>
<div class="a" style="left:1885px;top:628px;width:16px;height:17px;background:linear-gradient(#3f8ef7,#1e6de6);border-radius:4px"></div>
<svg style="left:1885px;top:628px" width="16" height="17" viewBox="0 0 16 17"><path d="M4.5 6.5L8 3.5L11.5 6.5M4.5 10.5L8 13.5L11.5 10.5" stroke="#fff" stroke-width="1.5" fill="none"/></svg>
<div class="t" style="left:1358px;top:653px;font-size:11px;color:#1e1e1e;letter-spacing:0.35px;">Showing frame 51 of 101</div>
<div class="t" style="left:1237px;top:673px;font-size:13px;color:#1e1e1e;letter-spacing:0.12px;">Playback ratio:</div>
<div class="t" style="left:1358px;top:673px;font-size:13px;color:#1e1e1e;letter-spacing:0.12px;">1 / 1</div>
<div class="a" style="left:1819px;top:669px;width:87px;height:20px;background:#fff;border-radius:5px;box-shadow:0 0 0 0.5px #c8c8c8,0 1px 1px #c4c4c4"></div>
<div class="t" style="left:1819px;top:673px;font-size:13px;color:#1e1e1e;letter-spacing:0.3px;width:87px;text-align:center">Change...</div>
<div class="t" style="left:1237px;top:705px;font-size:11.5px;color:#1e1e1e;letter-spacing:0.1px;">Status</div>
<div class="a" style="left:1230px;top:716px;width:684px;height:57px;background:#e3e3e3;border:1px solid #dedede;border-radius:5px"></div>
<div class="a" style="left:1237px;top:724px;width:670px;height:42px;background:#ececec;border:1px solid #a8a8a8"></div>
<div class="a" style="left:1226px;top:779px;width:692px;height:20px;background:#808080;border:1px solid #111"></div><div class="t" style="left:1226px;top:783px;width:692px;text-align:center;font-size:13px;color:#f4f4f4;letter-spacing:0.2px">Python script</div>
<div class="a" style="left:1226px;top:798px;width:692px;height:31px;border:1px solid #cfcfcf;border-top:0"></div>
<div class="a" style="left:1230px;top:803px;width:677px;height:22px;background:linear-gradient(#f6f6f6,#ececec 50%,#f2f2f2);border:1px solid #bdbdbd"></div>
<div class="t" style="left:1230px;top:808px;font-size:11px;color:#2a2a2a;letter-spacing:0.3px;width:677px;text-align:center">Edit script...</div>
<svg style="left:1905px;top:816px" width="10" height="8" viewBox="0 0 10 8"><path d="M2 2.5L5 5.5L8 2.5" stroke="#333" stroke-width="1.2" fill="none"/></svg>
<div class="a" style="left:1226px;top:833px;width:692px;height:20px;background:#808080;border:1px solid #111"></div><div class="t" style="left:1226px;top:837px;width:692px;text-align:center;font-size:13px;color:#f4f4f4;letter-spacing:0.2px">Parameters</div>
<div class="a" style="left:1226px;top:852px;width:692px;height:45px;border:1px solid #cfcfcf;border-top:0"></div>
<div class="t" style="left:1248px;top:860px;font-size:13px;color:#1e1e1e;letter-spacing:0.25px;">Round cell to orthogonal:</div>
<div class="a" style="left:1403px;top:858px;width:14px;height:14px;border-radius:3.5px;background:linear-gradient(#3b8ff8,#1f74ee)"></div><svg style="left:1403px;top:858px" width="14" height="14" viewBox="0 0 14 14"><path d="M3.2 7.2L5.8 10L10.8 3.8" stroke="#fff" stroke-width="1.8" fill="none"/></svg>
<div class="t" style="left:1325px;top:880px;font-size:13px;color:#1e1e1e;letter-spacing:0.25px;">Strict mode:</div>
<div class="a" style="left:1403px;top:878px;width:14px;height:14px;border-radius:3.5px;background:#fff;box-shadow:inset 0 0 0 0.6px #c4c4c4,0 0.5px 0.5px #d0d0d0"></div>
<div class="a" style="left:1226px;top:899px;width:692px;height:20px;background:#808080;border:1px solid #111"></div><div class="t" style="left:1226px;top:903px;width:692px;text-align:center;font-size:13px;color:#f4f4f4;letter-spacing:0.2px">Script output</div>
<div class="a" style="left:1230px;top:922px;width:685px;height:186px;background:#fff;border:1px solid #c8c8c8;border-bottom:0"></div>

<svg style="left:0;top:0" width="1920" height="1108" viewBox="0 0 1920 1108"><path d="M0 0H5.5Q1.5 1.5 0 5.5Z M1920 0H1914.5Q1918.5 1.5 1920 5.5Z M0 1108H5.5Q1.5 1106.5 0 1102.5Z M1920 1108H1914.5Q1918.5 1106.5 1920 1102.5Z" fill="#000"/></svg>
</body></html>
